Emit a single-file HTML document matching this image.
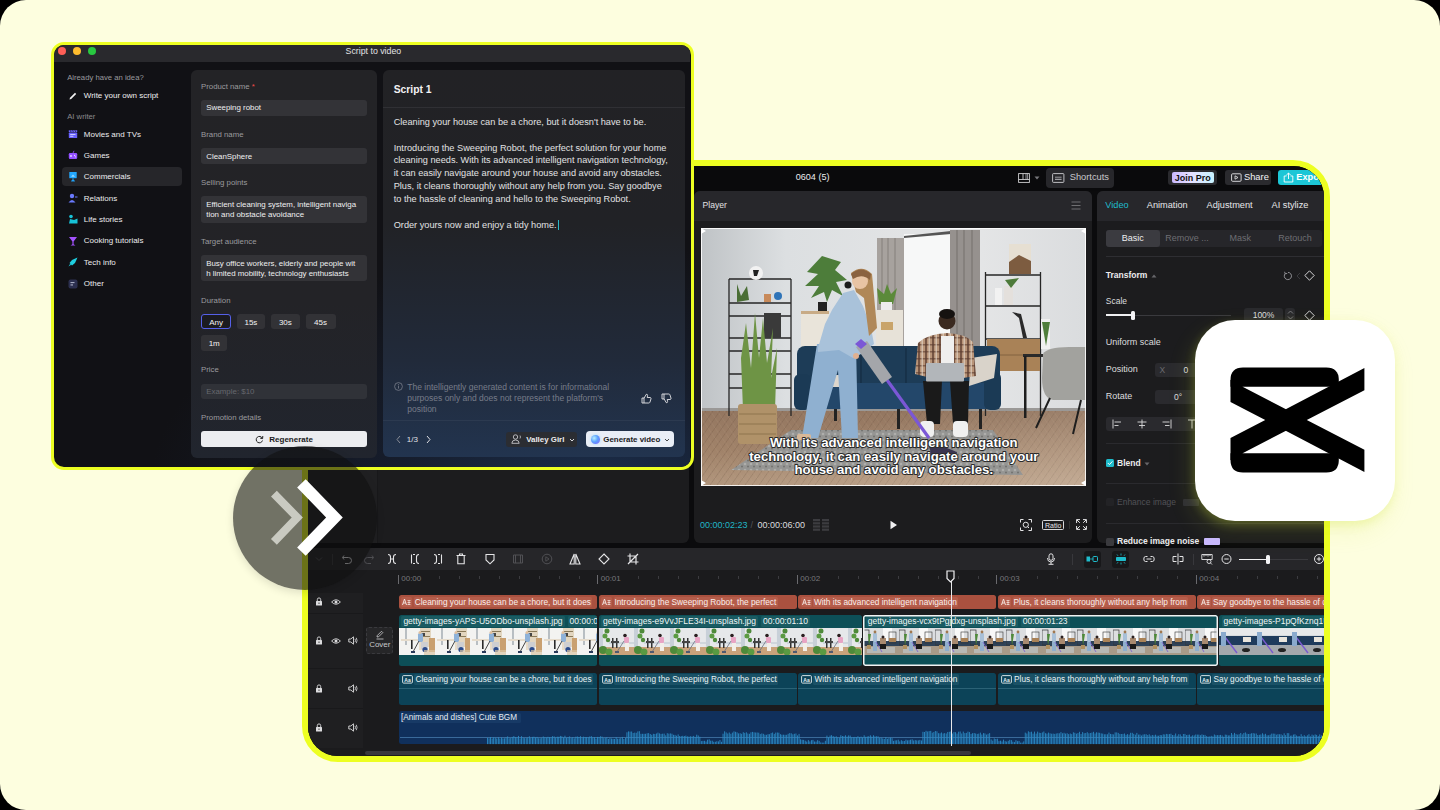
<!DOCTYPE html>
<html><head><meta charset="utf-8">
<style>
*{box-sizing:border-box;margin:0;padding:0}
html,body{width:1440px;height:810px;overflow:hidden;background:#000;font-family:"Liberation Sans",sans-serif}
.a{position:absolute}
#card{position:absolute;left:0;top:0;width:1440px;height:810px;border-radius:26px;background:#FDFEDF;overflow:hidden}
/* window 2 */
#w2{position:absolute;left:302px;top:159.5px;width:1028px;height:602.5px;border:6px solid #EDFF22;border-radius:14px 37px 36px 36px;background:#0b0b0d;overflow:hidden}
#w1{position:absolute;left:51px;top:41.5px;width:642.5px;height:428.5px;border:3.5px solid #EDFF22;border-radius:13px;background:#111115;overflow:hidden}
.t{position:absolute;white-space:nowrap;line-height:1}
</style></head><body>
<div id="card">

<div id="w2">
<div class="a" style="left:0;top:0;width:1016px;height:25.5px;background:#0a0a0c"></div>
<div class="t" style="left:487.7px;top:7.2px;font-size:9.1px;color:#ececee">0604 (5)</div>
<svg class="a" style="left:710px;top:7.5px" width="12" height="10" viewBox="0 0 12 10"><rect x="0.6" y="0.6" width="10.8" height="8.8" fill="none" stroke="#cfcfd2" stroke-width="0.9"/><line x1="0.6" y1="6.5" x2="11.4" y2="6.5" stroke="#cfcfd2" stroke-width="0.9"/><line x1="5" y1="0.6" x2="5" y2="6.5" stroke="#cfcfd2" stroke-width="0.9"/><line x1="8" y1="0.6" x2="8" y2="6.5" stroke="#cfcfd2" stroke-width="0.7"/><line x1="9.6" y1="0.6" x2="9.6" y2="6.5" stroke="#cfcfd2" stroke-width="0.7"/><rect x="0.6" y="0.6" width="4.4" height="5.9" fill="#cfcfd2" opacity="0.0"/></svg>
<svg class="a" style="left:726px;top:10.5px" width="6" height="4" viewBox="0 0 6 4"><path d="M0.5 0.5 L5.5 0.5 L3 3.5 Z" fill="#77777b"/></svg>
<div class="a" style="left:737.9px;top:2.8px;width:68.1px;height:19.4px;background:#27272b;border-radius:4px"></div>
<svg class="a" style="left:744px;top:7.3px" width="13" height="10" viewBox="0 0 13 10"><rect x="0.6" y="0.6" width="11.3" height="8.8" rx="0.8" fill="none" stroke="#cfcfd2" stroke-width="0.9"/><line x1="3" y1="4.2" x2="9.6" y2="4.2" stroke="#cfcfd2" stroke-width="0.7"/><line x1="3" y1="6.3" x2="9.6" y2="6.3" stroke="#cfcfd2" stroke-width="0.9"/></svg>
<div class="t" style="left:761.7px;top:7.4px;font-size:9.3px;color:#c9c9cd">Shortcuts</div>
<div class="a" style="left:860px;top:4.9px;width:48.5px;height:15px;background:#2a2a2e;border-radius:3px"></div>
<div class="a" style="left:863.5px;top:6.9px;width:42.5px;height:11.1px;border-radius:2px;background:linear-gradient(90deg,#c9b8ff 0%,#e6e0ff 45%,#c8f3ff 100%)"></div>
<div class="t" style="left:863.5px;width:42.5px;text-align:center;top:8px;font-size:9px;font-weight:700;color:#111">Join Pro</div>
<div class="a" style="left:916.6px;top:4.9px;width:46.2px;height:15px;background:#2a2a2e;border-radius:3px"></div>
<svg class="a" style="left:922.5px;top:7.5px" width="11" height="10" viewBox="0 0 11 10"><rect x="0.6" y="0.8" width="9.5" height="7.5" rx="1" fill="none" stroke="#e8e8ea" stroke-width="0.9"/><path d="M4 2.8 L7 4.5 L4 6.2 Z" fill="none" stroke="#e8e8ea" stroke-width="0.8"/></svg>
<div class="t" style="left:936px;top:7.6px;font-size:9.3px;color:#f4f4f6">Share</div>
<div class="a" style="left:970.2px;top:4.9px;width:60px;height:15px;background:#1cc6d6;border-radius:3px"></div>
<svg class="a" style="left:975px;top:6.5px" width="11" height="11" viewBox="0 0 11 11"><path d="M3.5 4 H1.2 V10 H9.8 V4 H7.5" fill="none" stroke="#fff" stroke-width="0.9"/><path d="M5.5 7 V1 M3.3 3.2 L5.5 1 L7.7 3.2" fill="none" stroke="#fff" stroke-width="0.9"/></svg>
<div class="t" style="left:988.3px;top:7.8px;font-size:9.2px;font-weight:700;color:#fff">Export</div>
<div class="a" style="left:0;top:25.5px;width:380.6px;height:351.7px;background:#1c1c1e;border-radius:0 6px 6px 0"></div>
<div class="a" style="left:0;top:25.5px;width:69px;height:351.7px;background:#202022"></div>
<div class="a" style="left:69px;top:25.5px;width:1px;height:351.7px;background:#18181a"></div>
<div class="a" style="left:386px;top:25.5px;width:397.7px;height:351.7px;background:#1c1c1e;border-radius:6px"></div>
<div class="a" style="left:386px;top:25.5px;width:397.7px;height:29.8px;background:#27272b;border-radius:6px 6px 0 0"></div>
<div class="t" style="left:394.5px;top:35.9px;font-size:8.6px;color:#e2e2e4">Player</div>
<svg class="a" style="left:762.6px;top:35.2px" width="10" height="9" viewBox="0 0 10 9"><line x1="0.5" y1="1" x2="9.5" y2="1" stroke="#77777b" stroke-width="0.9"/><line x1="0.5" y1="4.5" x2="9.5" y2="4.5" stroke="#77777b" stroke-width="0.9"/><line x1="0.5" y1="8" x2="9.5" y2="8" stroke="#77777b" stroke-width="0.9"/></svg>
<div class="t" style="left:392px;top:355.6px;font-size:9px;color:#20b6c6">00:00:02:23</div>
<div class="t" style="left:442.5px;top:355.6px;font-size:9px;color:#55555a">/</div>
<div class="t" style="left:449.5px;top:355.6px;font-size:9px;color:#dcdcde">00:00:06:00</div>
<svg class="a" style="left:505px;top:353.5px" width="16" height="12" viewBox="0 0 16 12"><g fill="#3c3c40"><rect x="0" y="0" width="7" height="2.2"/><rect x="0" y="3.2" width="7" height="2.2"/><rect x="0" y="6.4" width="7" height="2.2"/><rect x="0" y="9.6" width="7" height="2.2"/><rect x="9" y="0" width="7" height="2.2"/><rect x="9" y="3.2" width="7" height="2.2"/><rect x="9" y="6.4" width="7" height="2.2"/><rect x="9" y="9.6" width="7" height="2.2"/></g></svg>
<svg class="a" style="left:580.5px;top:354.3px" width="9" height="10" viewBox="0 0 9 10"><path d="M1.5 0.8 L8 5 L1.5 9.2 Z" fill="#f0f0f2"/></svg>
<svg class="a" style="left:712px;top:353.3px" width="12" height="12" viewBox="0 0 12 12"><path d="M0.5 3.5 V0.5 H3.5 M8.5 0.5 H11.5 V3.5 M11.5 8.5 V11.5 H8.5 M3.5 11.5 H0.5 V8.5" fill="none" stroke="#e6e6e8" stroke-width="1"/><circle cx="5.8" cy="5.8" r="2.6" fill="none" stroke="#e6e6e8" stroke-width="1"/><line x1="7.6" y1="7.6" x2="9" y2="9" stroke="#e6e6e8" stroke-width="1"/></svg>
<div class="a" style="left:734px;top:354px;width:22.4px;height:10.5px;border:1px solid #d8d8da;border-radius:1.5px"></div>
<div class="t" style="left:734px;width:22.4px;text-align:center;top:356.2px;font-size:7px;color:#e6e6e8">Ratio</div>
<div class="a" style="left:761px;top:355px;width:1px;height:8px;background:#333"></div>
<svg class="a" style="left:767.5px;top:353.8px" width="11" height="11" viewBox="0 0 11 11"><path d="M0.6 4 V0.6 H4 M7 0.6 H10.4 V4 M10.4 7 V10.4 H7 M4 10.4 H0.6 V7 M0.8 0.8 L3.8 3.8 M10.2 0.8 L7.2 3.8 M10.2 10.2 L7.2 7.2 M0.8 10.2 L3.8 7.2" fill="none" stroke="#e6e6e8" stroke-width="1"/></svg>
<div class="a" style="left:789.2px;top:25.5px;width:240px;height:351.7px;background:#1c1c1e;border-radius:6px 0 0 6px"></div>
<div class="a" style="left:789.2px;top:25.5px;width:240px;height:29.5px;background:#27272b;border-radius:6px 0 0 0"></div>
<div class="t" style="left:797.3px;top:35.1px;font-size:9.2px;color:#1fbccc">Video</div>
<div class="t" style="left:838.8px;top:35.1px;font-size:9.2px;color:#e8e8ea">Animation</div>
<div class="t" style="left:898.6px;top:35.1px;font-size:9.2px;color:#e8e8ea">Adjustment</div>
<div class="t" style="left:963.6px;top:35.1px;font-size:9.2px;color:#e8e8ea">AI stylize</div>
<div class="a" style="left:797.8px;top:64.9px;width:215.9px;height:16.6px;background:#26262a;border-radius:3px"></div>
<div class="a" style="left:797.8px;top:64.9px;width:54.1px;height:16.6px;background:#3b3b40;border-radius:3px"></div>
<div class="t" style="left:797.8px;width:54.1px;text-align:center;top:68.7px;font-size:9px;color:#eeeef0">Basic</div>
<div class="t" style="left:857.3px;top:68.7px;font-size:9px;color:#6e6e73">Remove ...</div>
<div class="t" style="left:912.2px;width:40px;text-align:center;top:68.7px;font-size:9px;color:#6e6e73">Mask</div>
<div class="t" style="left:962px;width:50px;text-align:center;top:68.7px;font-size:9px;color:#6e6e73">Retouch</div>
<div class="a" style="left:797.8px;top:90.3px;width:220px;height:1px;background:#2e2e32"></div>
<div class="t" style="left:797.8px;top:105.9px;font-size:8.5px;font-weight:700;color:#ececee">Transform</div>
<svg class="a" style="left:843px;top:108px" width="6" height="4" viewBox="0 0 6 4"><path d="M0.5 3.5 L5.5 3.5 L3 0.5 Z" fill="#66666a"/></svg>
<svg class="a" style="left:974.5px;top:105px" width="10" height="10" viewBox="0 0 10 10"><path d="M2.2 2.6 A3.6 3.6 0 1 0 5 1.4" fill="none" stroke="#9a9a9e" stroke-width="0.9"/><path d="M1.6 0.8 L2.2 2.8 L4.2 2.4" fill="none" stroke="#9a9a9e" stroke-width="0.9"/></svg>
<svg class="a" style="left:988px;top:105px" width="5" height="10" viewBox="0 0 5 10"><path d="M4 2 L1 5 L4 8" fill="none" stroke="#444448" stroke-width="0.8"/></svg>
<svg class="a" style="left:996.4px;top:104.6px" width="11" height="11" viewBox="0 0 11 11"><path d="M5.5 0.8 L10.2 5.5 L5.5 10.2 L0.8 5.5 Z" fill="none" stroke="#e6e6e8" stroke-width="0.9"/></svg>
<div class="t" style="left:797.8px;top:131.6px;font-size:8.5px;color:#dcdcde">Scale</div>
<div class="a" style="left:797.8px;top:149.1px;width:125px;height:1px;background:#3a3a3e"></div>
<div class="a" style="left:797.8px;top:148.8px;width:26.7px;height:1.6px;background:#f0f0f2"></div>
<div class="a" style="left:822.5px;top:145px;width:4.5px;height:9px;background:#f4f4f6;border-radius:1.5px"></div>
<div class="a" style="left:936.4px;top:142.2px;width:38.3px;height:14.8px;background:#2a2a2e;border-radius:3px"></div>
<div class="t" style="left:936.4px;width:38.3px;text-align:center;top:145.6px;font-size:8.5px;color:#dcdcde">100%</div>
<div class="a" style="left:976.7px;top:142.2px;width:10.8px;height:14.8px;background:#2a2a2e;border-radius:3px"></div>
<svg class="a" style="left:978.7px;top:144.5px" width="7" height="10" viewBox="0 0 7 10"><path d="M1 3.5 L3.5 1 L6 3.5 M1 6.5 L3.5 9 L6 6.5" fill="none" stroke="#8a8a8e" stroke-width="0.8"/></svg>
<svg class="a" style="left:996.4px;top:144px" width="11" height="11" viewBox="0 0 11 11"><path d="M5.5 0.8 L10.2 5.5 L5.5 10.2 L0.8 5.5 Z" fill="none" stroke="#e6e6e8" stroke-width="0.9"/></svg>
<div class="t" style="left:797.8px;top:172.3px;font-size:9px;color:#dcdcde">Uniform scale</div>
<div class="t" style="left:797.8px;top:199.2px;font-size:9px;color:#dcdcde">Position</div>
<div class="a" style="left:846.8px;top:197.2px;width:80px;height:14.2px;background:#2a2a2e;border-radius:3px"></div>
<div class="t" style="left:851.5px;top:200px;font-size:8.5px;color:#6a6a6e">X</div>
<div class="t" style="left:875.5px;top:200px;font-size:8.5px;color:#dcdcde">0</div>
<div class="t" style="left:797.8px;top:226.5px;font-size:9px;color:#dcdcde">Rotate</div>
<div class="a" style="left:846.8px;top:224.2px;width:80px;height:14.7px;background:#2a2a2e;border-radius:3px"></div>
<div class="t" style="left:866px;top:227.3px;font-size:8.5px;color:#dcdcde">0°</div>
<div class="a" style="left:797.6px;top:251.1px;width:120px;height:14.8px;background:#2a2a2e;border-radius:3px"></div>
<svg class="a" style="left:804px;top:253.5px" width="90" height="10" viewBox="0 0 90 10"><g stroke="#dcdcde" stroke-width="0.9" fill="none"><line x1="1" y1="0.5" x2="1" y2="9.5"/><line x1="2.5" y1="3" x2="9" y2="3"/><line x1="2.5" y1="6.5" x2="6.5" y2="6.5"/><line x1="30" y1="0.5" x2="30" y2="9.5"/><line x1="25.5" y1="3" x2="34.5" y2="3"/><line x1="27" y1="6.5" x2="33" y2="6.5"/><line x1="59" y1="0.5" x2="59" y2="9.5"/><line x1="50.5" y1="3" x2="57.5" y2="3"/><line x1="53" y1="6.5" x2="57.5" y2="6.5"/><line x1="76" y1="1" x2="84" y2="1"/><line x1="80" y1="1" x2="80" y2="9.5"/></g></svg>
<div class="a" style="left:797.8px;top:277.5px;width:220px;height:1px;background:#2a2a2e"></div>
<div class="a" style="left:798px;top:293.6px;width:8px;height:8px;background:#1fbccc;border-radius:1.5px"></div>
<svg class="a" style="left:798px;top:293.6px" width="8" height="8" viewBox="0 0 8 8"><path d="M1.8 4 L3.4 5.6 L6.4 2.4" fill="none" stroke="#fff" stroke-width="1"/></svg>
<div class="t" style="left:809px;top:293.3px;font-size:8.5px;font-weight:700;color:#ececee">Blend</div>
<svg class="a" style="left:836px;top:296px" width="6" height="4" viewBox="0 0 6 4"><path d="M0.5 0.5 L5.5 0.5 L3 3.5 Z" fill="#66666a"/></svg>
<div class="a" style="left:797.8px;top:317.3px;width:220px;height:1px;background:#2a2a2e"></div>
<div class="a" style="left:798px;top:332.5px;width:8px;height:8px;background:#232326;border-radius:1.5px"></div>
<div class="t" style="left:809px;top:332.4px;font-size:8.5px;color:#515156">Enhance image</div>
<div class="a" style="left:875px;top:333px;width:16px;height:7px;background:#2e2e34;border-radius:1px"></div>
<div class="a" style="left:797.8px;top:357.1px;width:220px;height:1px;background:#2a2a2e"></div>
<div class="a" style="left:798px;top:372px;width:8px;height:8px;background:#3a3a3e;border-radius:1.5px"></div>
<div class="t" style="left:809px;top:371.9px;font-size:8.5px;font-weight:700;color:#ececee">Reduce image noise</div>
<div class="a" style="left:896px;top:372.5px;width:16px;height:7px;background:#c8b8ff;border-radius:1px"></div>
<div class="a" style="left:0;top:382px;width:1016px;height:22.5px;background:#262629"></div>
<svg class="a" style="left:5.25px;top:387.75px" width="12" height="12" viewBox="0 0 12 12"><path d="M3 4.5 L6 7.5 L9 4.5" fill="none" stroke="#505054" stroke-width="1"/></svg>
<div class="a" style="left:24px;top:388.5px;width:1px;height:10.5px;background:#3a3a3e"></div>
<svg class="a" style="left:32.5px;top:387.75px" width="12" height="12" viewBox="0 0 12 12"><path d="M3 2.5 L1.5 4.5 L3 6.5 M1.8 4.5 H7.5 A3 3 0 0 1 7.5 10.5 H4" fill="none" stroke="#e4e4e6" stroke-width="1"/></svg>
<svg class="a" style="left:55.25px;top:387.75px" width="12" height="12" viewBox="0 0 12 12"><path d="M9 2.5 L10.5 4.5 L9 6.5 M10.2 4.5 H4.5 A3 3 0 0 0 4.5 10.5 H8" fill="none" stroke="#505054" stroke-width="1"/></svg>
<svg class="a" style="left:78.0px;top:387.75px" width="12" height="12" viewBox="0 0 12 12"><path d="M2 1.5 Q4.5 1.5 4.5 4 V8 Q4.5 10.5 2 10.5 M10 1.5 Q7.5 1.5 7.5 4 V8 Q7.5 10.5 10 10.5 M5 6 H7" fill="none" stroke="#e4e4e6" stroke-width="1.1"/></svg>
<svg class="a" style="left:101.0px;top:387.75px" width="12" height="12" viewBox="0 0 12 12"><path d="M2.5 1.5 V10.5 M4 1.5 H6 M4 10.5 H6 M10 1.5 Q7.5 1.5 7.5 4 V8 Q7.5 10.5 10 10.5" fill="none" stroke="#e4e4e6" stroke-width="1.1"/></svg>
<svg class="a" style="left:123.5px;top:387.75px" width="12" height="12" viewBox="0 0 12 12"><path d="M9.5 1.5 V10.5 M8 1.5 H6 M8 10.5 H6 M2 1.5 Q4.5 1.5 4.5 4 V8 Q4.5 10.5 2 10.5" fill="none" stroke="#e4e4e6" stroke-width="1.1"/></svg>
<svg class="a" style="left:146.75px;top:387.75px" width="12" height="12" viewBox="0 0 12 12"><path d="M1.5 2.5 H10.5 M4.5 2.5 V1 H7.5 V2.5 M2.8 2.5 V10.8 H9.2 V2.5" fill="none" stroke="#e4e4e6" stroke-width="1.1"/></svg>
<svg class="a" style="left:176.0px;top:387.75px" width="12" height="12" viewBox="0 0 12 12"><path d="M2 1.5 H10 V7 L6 10.8 L2 7 Z" fill="none" stroke="#e4e4e6" stroke-width="1.1"/></svg>
<svg class="a" style="left:204.0px;top:387.75px" width="12" height="12" viewBox="0 0 12 12"><path d="M1.5 2 H10.5 V10 H1.5 Z M3.5 2 V10 M8.5 2 V10" fill="none" stroke="#505054" stroke-width="1"/></svg>
<svg class="a" style="left:232.75px;top:387.75px" width="12" height="12" viewBox="0 0 12 12"><circle cx="6" cy="6" r="4.8" fill="none" stroke="#505054" stroke-width="1"/><path d="M4.8 3.8 L8 6 L4.8 8.2 Z" fill="none" stroke="#505054" stroke-width="0.9"/></svg>
<svg class="a" style="left:261.0px;top:387.75px" width="12" height="12" viewBox="0 0 12 12"><path d="M5.2 1 V11 L1 11 Z M6.8 1 V11 L11 11 Z" fill="none" stroke="#e4e4e6" stroke-width="1.1"/></svg>
<svg class="a" style="left:289.75px;top:387.75px" width="12" height="12" viewBox="0 0 12 12"><path d="M6 1 L11 6 L6 11 L1 6 Z" fill="none" stroke="#e4e4e6" stroke-width="1.1"/><path d="M8 0.5 L9.5 2 M2.5 10 L4 11.5" stroke="#262629" stroke-width="1.5"/></svg>
<svg class="a" style="left:318.5px;top:387.75px" width="12" height="12" viewBox="0 0 12 12"><path d="M3 0.5 V9 H11.5 M0.5 3 H9 V11.5 M1 11 L11 1" fill="none" stroke="#e4e4e6" stroke-width="1.2"/></svg>
<svg class="a" style="left:736.9px;top:387.75px" width="12" height="12" viewBox="0 0 12 12"><rect x="4" y="0.8" width="4" height="6.5" rx="2" fill="none" stroke="#e4e4e6" stroke-width="1"/><path d="M2.5 5 Q2.5 9 6 9 Q9.5 9 9.5 5 M6 9 V11 M3.5 11.3 H8.5" fill="none" stroke="#e4e4e6" stroke-width="1"/></svg>
<div class="a" style="left:764px;top:388.5px;width:1px;height:10.5px;background:#38383c"></div>
<div class="a" style="left:775.8px;top:385.3px;width:16.8px;height:16.8px;background:#18181a;border-radius:3px"></div>
<div class="a" style="left:804.2px;top:385.3px;width:16.8px;height:16.8px;background:#18181a;border-radius:3px"></div>
<svg class="a" style="left:778.2px;top:387.75px" width="12" height="12" viewBox="0 0 12 12"><rect x="0.5" y="3.5" width="3.5" height="5" fill="#1fbccc"/><rect x="7" y="3.5" width="4.5" height="5" rx="0.8" fill="none" stroke="#1fbccc" stroke-width="1"/><path d="M4 6 H7" stroke="#1fbccc" stroke-width="0.8"/></svg>
<svg class="a" style="left:806.6px;top:387.75px" width="12" height="12" viewBox="0 0 12 12"><rect x="1" y="4" width="10" height="4" rx="0.8" fill="#1fbccc"/><path d="M6 0.5 V2.5 M6 9.5 V11.5 M2 1.5 L3 2.8 M10 1.5 L9 2.8 M2 10.5 L3 9.2 M10 10.5 L9 9.2" stroke="#1fbccc" stroke-width="0.8"/></svg>
<svg class="a" style="left:835.0px;top:387.75px" width="12" height="12" viewBox="0 0 12 12"><path d="M4.5 3.5 H2.5 Q0.8 3.5 0.8 6 Q0.8 8.5 2.5 8.5 H4.5 M7.5 3.5 H9.5 Q11.2 3.5 11.2 6 Q11.2 8.5 9.5 8.5 H7.5 M3.5 6 H8.5" fill="none" stroke="#e4e4e6" stroke-width="1"/></svg>
<svg class="a" style="left:863.7px;top:387.75px" width="12" height="12" viewBox="0 0 12 12"><path d="M6 0.5 V11.5 M4.5 3.5 H1 V8.5 H4.5 M7.5 3.5 H11 V8.5 H7.5" fill="none" stroke="#e4e4e6" stroke-width="1"/></svg>
<div class="a" style="left:884.5px;top:388.5px;width:1px;height:10.5px;background:#38383c"></div>
<svg class="a" style="left:892.5px;top:387.75px" width="12" height="12" viewBox="0 0 12 12"><path d="M0.8 1.5 H11.2 V6.5 H0.8 Z M3 1.5 V3.5 M5 1.5 V3 M7 1.5 V3.5 M9 1.5 V3" fill="none" stroke="#e4e4e6" stroke-width="0.9"/><circle cx="8" cy="8.5" r="2" fill="none" stroke="#e4e4e6" stroke-width="0.9"/><path d="M9.4 9.9 L11 11.5" stroke="#e4e4e6" stroke-width="0.9"/></svg>
<svg class="a" style="left:913.0px;top:387.75px" width="12" height="12" viewBox="0 0 12 12"><circle cx="5.5" cy="6" r="4.5" fill="none" stroke="#e4e4e6" stroke-width="1"/><path d="M3.3 6 H7.7" stroke="#e4e4e6" stroke-width="1"/></svg>
<div class="a" style="left:930.8px;top:393.3px;width:69px;height:1px;background:#3a3a3e"></div>
<div class="a" style="left:930.8px;top:393px;width:29px;height:1.6px;background:#f0f0f2"></div>
<div class="a" style="left:957.6px;top:389.2px;width:4.8px;height:9px;background:#f4f4f6;border-radius:1.5px"></div>
<svg class="a" style="left:1004.5px;top:387.75px" width="12" height="12" viewBox="0 0 12 12"><circle cx="6" cy="6" r="4.5" fill="none" stroke="#e4e4e6" stroke-width="1"/><path d="M3.8 6 H8.2 M6 3.8 V8.2" stroke="#e4e4e6" stroke-width="1"/></svg>
<div class="a" style="left:0;top:404.5px;width:1016px;height:186px;background:#1b1b1d"></div>
<div class="a" style="left:0;top:427.4px;width:54.5px;height:155px;background:#1f1f21"></div>
<div class="a" style="left:0;top:447.4px;width:54.5px;height:1px;background:#19191b"></div>
<div class="a" style="left:0;top:502.5px;width:54.5px;height:1px;background:#19191b"></div>
<div class="a" style="left:0;top:542.5px;width:54.5px;height:1px;background:#19191b"></div>
<div class="a" style="left:89.95px;top:409px;width:0.8px;height:9px;background:#6a6a6e"></div>
<div class="t" style="left:93.25px;top:409.5px;font-size:8px;color:#77777b">00:00</div>
<div class="a" style="left:289.45px;top:409px;width:0.8px;height:9px;background:#6a6a6e"></div>
<div class="t" style="left:292.75px;top:409.5px;font-size:8px;color:#77777b">00:01</div>
<div class="a" style="left:488.95px;top:409px;width:0.8px;height:9px;background:#6a6a6e"></div>
<div class="t" style="left:492.25px;top:409.5px;font-size:8px;color:#77777b">00:02</div>
<div class="a" style="left:688.45px;top:409px;width:0.8px;height:9px;background:#6a6a6e"></div>
<div class="t" style="left:691.75px;top:409.5px;font-size:8px;color:#77777b">00:03</div>
<div class="a" style="left:887.95px;top:409px;width:0.8px;height:9px;background:#6a6a6e"></div>
<div class="t" style="left:891.25px;top:409.5px;font-size:8px;color:#77777b">00:04</div>
<div class="a" style="left:130.75px;top:410px;width:0.8px;height:3.5px;background:#3c3c40"></div>
<div class="a" style="left:150.75px;top:410px;width:0.8px;height:3.5px;background:#3c3c40"></div>
<div class="a" style="left:170.75px;top:410px;width:0.8px;height:3.5px;background:#3c3c40"></div>
<div class="a" style="left:190.75px;top:410px;width:0.8px;height:3.5px;background:#3c3c40"></div>
<div class="a" style="left:210.75px;top:410px;width:0.8px;height:3.5px;background:#3c3c40"></div>
<div class="a" style="left:230.75px;top:410px;width:0.8px;height:3.5px;background:#3c3c40"></div>
<div class="a" style="left:250.75px;top:410px;width:0.8px;height:3.5px;background:#3c3c40"></div>
<div class="a" style="left:270.75px;top:410px;width:0.8px;height:3.5px;background:#3c3c40"></div>
<div class="a" style="left:330.25px;top:410px;width:0.8px;height:3.5px;background:#3c3c40"></div>
<div class="a" style="left:350.25px;top:410px;width:0.8px;height:3.5px;background:#3c3c40"></div>
<div class="a" style="left:370.25px;top:410px;width:0.8px;height:3.5px;background:#3c3c40"></div>
<div class="a" style="left:390.25px;top:410px;width:0.8px;height:3.5px;background:#3c3c40"></div>
<div class="a" style="left:410.25px;top:410px;width:0.8px;height:3.5px;background:#3c3c40"></div>
<div class="a" style="left:430.25px;top:410px;width:0.8px;height:3.5px;background:#3c3c40"></div>
<div class="a" style="left:450.25px;top:410px;width:0.8px;height:3.5px;background:#3c3c40"></div>
<div class="a" style="left:470.25px;top:410px;width:0.8px;height:3.5px;background:#3c3c40"></div>
<div class="a" style="left:529.75px;top:410px;width:0.8px;height:3.5px;background:#3c3c40"></div>
<div class="a" style="left:549.75px;top:410px;width:0.8px;height:3.5px;background:#3c3c40"></div>
<div class="a" style="left:569.75px;top:410px;width:0.8px;height:3.5px;background:#3c3c40"></div>
<div class="a" style="left:589.75px;top:410px;width:0.8px;height:3.5px;background:#3c3c40"></div>
<div class="a" style="left:609.75px;top:410px;width:0.8px;height:3.5px;background:#3c3c40"></div>
<div class="a" style="left:629.75px;top:410px;width:0.8px;height:3.5px;background:#3c3c40"></div>
<div class="a" style="left:649.75px;top:410px;width:0.8px;height:3.5px;background:#3c3c40"></div>
<div class="a" style="left:669.75px;top:410px;width:0.8px;height:3.5px;background:#3c3c40"></div>
<div class="a" style="left:729.25px;top:410px;width:0.8px;height:3.5px;background:#3c3c40"></div>
<div class="a" style="left:749.25px;top:410px;width:0.8px;height:3.5px;background:#3c3c40"></div>
<div class="a" style="left:769.25px;top:410px;width:0.8px;height:3.5px;background:#3c3c40"></div>
<div class="a" style="left:789.25px;top:410px;width:0.8px;height:3.5px;background:#3c3c40"></div>
<div class="a" style="left:809.25px;top:410px;width:0.8px;height:3.5px;background:#3c3c40"></div>
<div class="a" style="left:829.25px;top:410px;width:0.8px;height:3.5px;background:#3c3c40"></div>
<div class="a" style="left:849.25px;top:410px;width:0.8px;height:3.5px;background:#3c3c40"></div>
<div class="a" style="left:869.25px;top:410px;width:0.8px;height:3.5px;background:#3c3c40"></div>
<div class="a" style="left:928.75px;top:410px;width:0.8px;height:3.5px;background:#3c3c40"></div>
<div class="a" style="left:948.75px;top:410px;width:0.8px;height:3.5px;background:#3c3c40"></div>
<div class="a" style="left:968.75px;top:410px;width:0.8px;height:3.5px;background:#3c3c40"></div>
<div class="a" style="left:988.75px;top:410px;width:0.8px;height:3.5px;background:#3c3c40"></div>
<div class="a" style="left:1008.75px;top:410px;width:0.8px;height:3.5px;background:#3c3c40"></div>
<svg class="a" style="left:6.6px;top:431.8px" width="8" height="9" viewBox="0 0 8 9"><rect x="1" y="4" width="6" height="4.5" rx="0.6" fill="#dcdcde"/><path d="M2.3 4 V2.6 A1.7 1.7 0 0 1 5.7 2.6 V4" fill="none" stroke="#dcdcde" stroke-width="0.9"/><rect x="3.6" y="5.5" width="0.8" height="1.5" fill="#1f1f21"/></svg>
<svg class="a" style="left:22.8px;top:432.3px" width="10" height="8" viewBox="0 0 10 8"><path d="M0.6 4 Q5 -0.5 9.4 4 Q5 8.5 0.6 4 Z" fill="none" stroke="#dcdcde" stroke-width="0.9"/><circle cx="5" cy="4" r="1.5" fill="#dcdcde"/></svg>
<svg class="a" style="left:6.6px;top:470.6px" width="8" height="9" viewBox="0 0 8 9"><rect x="1" y="4" width="6" height="4.5" rx="0.6" fill="#dcdcde"/><path d="M2.3 4 V2.6 A1.7 1.7 0 0 1 5.7 2.6 V4" fill="none" stroke="#dcdcde" stroke-width="0.9"/><rect x="3.6" y="5.5" width="0.8" height="1.5" fill="#1f1f21"/></svg>
<svg class="a" style="left:22.8px;top:471.1px" width="10" height="8" viewBox="0 0 10 8"><path d="M0.6 4 Q5 -0.5 9.4 4 Q5 8.5 0.6 4 Z" fill="none" stroke="#dcdcde" stroke-width="0.9"/><circle cx="5" cy="4" r="1.5" fill="#dcdcde"/></svg>
<svg class="a" style="left:39.9px;top:470.6px" width="10" height="9" viewBox="0 0 10 9"><path d="M0.8 3 H2.8 L5.5 0.8 V8.2 L2.8 6 H0.8 Z" fill="none" stroke="#dcdcde" stroke-width="0.9"/><path d="M7 2.8 Q8 4.5 7 6.2 M8.3 1.8 Q9.8 4.5 8.3 7.2" fill="none" stroke="#dcdcde" stroke-width="0.8"/></svg>
<svg class="a" style="left:6.6px;top:518.5px" width="8" height="9" viewBox="0 0 8 9"><rect x="1" y="4" width="6" height="4.5" rx="0.6" fill="#dcdcde"/><path d="M2.3 4 V2.6 A1.7 1.7 0 0 1 5.7 2.6 V4" fill="none" stroke="#dcdcde" stroke-width="0.9"/><rect x="3.6" y="5.5" width="0.8" height="1.5" fill="#1f1f21"/></svg>
<svg class="a" style="left:39.9px;top:518.5px" width="10" height="9" viewBox="0 0 10 9"><path d="M0.8 3 H2.8 L5.5 0.8 V8.2 L2.8 6 H0.8 Z" fill="none" stroke="#dcdcde" stroke-width="0.9"/><path d="M7 2.8 Q8 4.5 7 6.2 M8.3 1.8 Q9.8 4.5 8.3 7.2" fill="none" stroke="#dcdcde" stroke-width="0.8"/></svg>
<svg class="a" style="left:6.6px;top:557.4px" width="8" height="9" viewBox="0 0 8 9"><rect x="1" y="4" width="6" height="4.5" rx="0.6" fill="#dcdcde"/><path d="M2.3 4 V2.6 A1.7 1.7 0 0 1 5.7 2.6 V4" fill="none" stroke="#dcdcde" stroke-width="0.9"/><rect x="3.6" y="5.5" width="0.8" height="1.5" fill="#1f1f21"/></svg>
<svg class="a" style="left:39.9px;top:557.4px" width="10" height="9" viewBox="0 0 10 9"><path d="M0.8 3 H2.8 L5.5 0.8 V8.2 L2.8 6 H0.8 Z" fill="none" stroke="#dcdcde" stroke-width="0.9"/><path d="M7 2.8 Q8 4.5 7 6.2 M8.3 1.8 Q9.8 4.5 8.3 7.2" fill="none" stroke="#dcdcde" stroke-width="0.8"/></svg>
<div class="a" style="left:58.3px;top:461.5px;width:27px;height:27px;background:#262628;border:1px dashed #3a3a3e;border-radius:3px"></div>
<svg class="a" style="left:67px;top:464.5px" width="10" height="10" viewBox="0 0 10 10"><path d="M2 7 L2.3 5.5 L6.5 1.3 L7.8 2.6 L3.6 6.8 Z" fill="none" stroke="#d0d0d2" stroke-width="0.8"/><line x1="1.5" y1="9" x2="8.5" y2="9" stroke="#d0d0d2" stroke-width="0.8"/></svg>
<div class="t" style="left:58.3px;width:27px;text-align:center;top:475.5px;font-size:8px;color:#c8c8ca">Cover</div>
<div class="a" style="left:392.8px;top:62.5px;width:385px;height:257.5px;overflow:hidden">
<svg width="385" height="257.5" viewBox="0 0 385 257.5" style="position:absolute;left:0;top:0">
<defs>
<linearGradient id="wall" x1="0" y1="0" x2="1" y2="0"><stop offset="0" stop-color="#bfc3c6"/><stop offset="0.22" stop-color="#dcdfe1"/><stop offset="0.7" stop-color="#e5e6e7"/><stop offset="1" stop-color="#dadcde"/></linearGradient>
<linearGradient id="floor" x1="0" y1="0" x2="0" y2="1"><stop offset="0" stop-color="#937660"/><stop offset="0.5" stop-color="#a08269"/><stop offset="1" stop-color="#aa8d73"/></linearGradient>
<linearGradient id="floorlight" x1="0" y1="0" x2="1" y2="1"><stop offset="0.3" stop-color="#fff4e6" stop-opacity="0"/><stop offset="1" stop-color="#fff4e6" stop-opacity="0.3"/></linearGradient><pattern id="herr" width="14" height="10" patternUnits="userSpaceOnUse"><path d="M0 10 L7 0 M7 10 L14 0" stroke="#6e5442" stroke-width="0.6" opacity="0.5"/><path d="M0 0 L7 10 M7 0 L14 10" stroke="#b89a7e" stroke-width="0.5" opacity="0.35"/></pattern>
<pattern id="rugp" width="6" height="6" patternUnits="userSpaceOnUse"><rect width="6" height="6" fill="#959593"/><circle cx="2" cy="2" r="1.3" fill="#aeaeab"/><circle cx="5" cy="4.5" r="1" fill="#72726f"/></pattern>
<pattern id="check" width="7" height="7" patternUnits="userSpaceOnUse"><rect width="7" height="7" fill="#b89478"/><rect x="0" y="0" width="2" height="7" fill="#5a3a2e" opacity="0.7"/><rect x="0" y="4" width="7" height="1.5" fill="#5a3a2e" opacity="0.6"/><rect x="3.5" y="0" width="1.5" height="7" fill="#e8ddd0" opacity="0.6"/></pattern>
</defs>
<rect width="385" height="258" fill="url(#wall)"/>
<rect x="203" y="6" width="47" height="115" fill="#f7f8f8"/>
<path d="M203 8 L250 3 L250 6 L203 10 Z" fill="#555"/>
<rect x="176" y="10" width="27" height="111" fill="#a7a29e"/>
<path d="M181 10 V121 M187 10 V121 M194 10 V121" stroke="#8a8581" stroke-width="1.2"/>
<rect x="249" y="2" width="30" height="119" fill="#96918e"/>
<path d="M256 2 V121 M263 2 V121 M271 2 V121" stroke="#7e7976" stroke-width="1.4"/>
<rect x="0" y="182" width="385" height="76" fill="url(#floor)"/>
<rect x="0" y="182" width="385" height="76" fill="url(#herr)"/><rect x="0" y="182" width="385" height="76" fill="url(#floorlight)"/>
<rect x="0" y="180" width="385" height="3" fill="#9a9896"/>
<!-- left shelf -->
<g stroke="#262626" stroke-width="1.3" fill="none">
<path d="M28 51 V188 M90 51 V188 M28 51 H90 M28 75 H90 M28 88 H90 M28 110 H90 M28 123 H90 M28 146 H90 M28 160 H90"/>
</g>
<circle cx="55" cy="45" r="7" fill="#f2f2f2"/><path d="M52 42 L58 42 L56 48 L53 48 Z" fill="#222"/>
<rect x="63" y="85" width="17" height="25" fill="#3a3a3a"/>
<circle cx="77" cy="68" r="4" fill="#2f74b8"/>
<rect x="63" y="66" width="7" height="8" fill="#c88a5a"/>
<!-- white shelf center left -->
<rect x="100" y="83" width="28" height="65" fill="#e9e4da"/>
<rect x="100" y="83" width="28" height="3" fill="#c8ab86"/>
<rect x="175" y="82" width="27" height="38" fill="#e7e2d8"/>
<rect x="180" y="94" width="12" height="8" fill="#c9a46a"/>
<!-- plants -->
<path d="M121 28 L106 44 L117 46 L104 58 L118 58 L110 70 L123 64 L126 74 L131 62 L142 68 L135 54 L146 52 L134 42 L140 34 Z" fill="#4d7d3a"/>
<rect x="117" y="74" width="9" height="9" fill="#222"/>
<path d="M176 60 L183 66 L186 56 L190 66 L196 60 L192 76 L178 76 Z" fill="#5b8a3a"/>
<rect x="180" y="74" width="11" height="8" fill="#ececec"/>
<path d="M42 182 L40 130 L45 95 L50 140 L54 85 L58 130 L62 90 L66 135 L72 100 L70 150 L76 120 L74 182 Z" fill="#6e9445"/>
<path d="M36 56 L40 68 L46 58 L48 72 L36 74 Z" fill="#4a6e35"/>
<rect x="37" y="176" width="39" height="40" rx="3" fill="#b09269"/>
<path d="M38 186 H75 M38 196 H75 M38 206 H75" stroke="#8e744f" stroke-width="1"/>
<!-- right shelf -->
<g stroke="#262626" stroke-width="1.3" fill="none">
<path d="M284.5 44 V188 M339.5 44 V188 M284.5 47 H339.5 M284.5 78 H339.5 M284.5 111 H339.5"/>
</g>
<rect x="308" y="16" width="22" height="30" fill="#e6dfd2"/><path d="M308 34 L318 27 L330 33 V46 H308 Z" fill="#7d5c40"/>
<rect x="286" y="111" width="53" height="32" fill="#a98257"/>
<path d="M286 127 H339" stroke="#7a5a3a" stroke-width="0.8"/>
<rect x="294" y="60" width="7" height="17" fill="#f2f2f2"/><rect x="303" y="58" width="9" height="19" fill="#e4e0dc"/>
<path d="M304 52 L310 60 L318 50 Z" fill="#4d7a3a"/>
<path d="M311 84 L320 86 L326 110 L322 110 L318 90 Z" fill="#2a2a2a"/>
<rect x="340" y="91" width="9" height="30" fill="#f0f0f0"/>
<path d="M341 94 L345 118 L349 94 Z" fill="#4f7e3a"/>
<!-- desk and chair right -->
<rect x="322" y="126" width="40" height="3" fill="#2a2a2a"/>
<rect x="323" y="128" width="2.5" height="62" fill="#1e1e1e"/>
<path d="M342 126 Q346 119 368 119 L385 119 L385 172 L352 172 Q341 170 341 150 Z" fill="#a2a29e"/>
<path d="M349 170 L335 200 M380 172 L372 206" stroke="#1e1e1e" stroke-width="2"/>
<!-- sofa -->
<rect x="96" y="118" width="203" height="44" rx="8" fill="#1d3c57"/>
<path d="M160 122 V158 M205 120 V158" stroke="#152c42" stroke-width="1.2"/>
<rect x="100" y="155" width="195" height="26" rx="4" fill="#23476a"/>
<rect x="93" y="146" width="17" height="36" rx="6" fill="#1b3a55"/>
<rect x="283" y="144" width="17" height="38" rx="6" fill="#1b3a55"/>
<path d="M270 130 L296 126 L293 150 L268 158 Z" fill="#d9d3ca"/>
<rect x="130" y="147" width="18" height="12" fill="#ddd6cc"/>
<rect x="133" y="181" width="3" height="12" fill="#222"/><rect x="196" y="181" width="3" height="20" fill="#222"/><rect x="278" y="181" width="3" height="20" fill="#222"/>
<!-- rug -->
<path d="M30 242 L90 202 L292 202 L322 247 Z" fill="url(#rugp)"/>
<!-- man -->
<path d="M222 153 H241 L239 196 H226 Z M249 153 H268 L267 196 H252 Z" fill="#1a1a1a"/>
<rect x="219" y="193" width="14" height="16" rx="4" fill="#f0f0f0"/><rect x="252" y="193" width="15" height="16" rx="4" fill="#f0f0f0"/>
<path d="M214 146 L217 115 Q226 106 246 105 Q265 106 272 114 L275 148 L262 150 L230 150 Z" fill="url(#check)"/>
<rect x="240" y="108" width="13" height="30" fill="#f0efee"/>
<rect x="225" y="135" width="38" height="18.5" rx="1" fill="#b2b6ba"/>
<circle cx="246" cy="93" r="8.5" fill="#3b2a20"/><ellipse cx="246" cy="86" rx="8" ry="5" fill="#161210"/>
<!-- woman -->
<path d="M101 210 L116 116 L155 116 L157 210 L141 210 L137 142 L117 210 Z" fill="#8fb0d0"/>
<path d="M117 120 L124 96 L131 82 L142 65 L153 62 L162 78 L170 100 L173 116 L160 126 L152 130 L138 122 L117 124 Z" fill="#a9c2da"/>
<path d="M150 45 Q161 36 171 46 L176 100 L168 108 L163 70 L155 64 Z" fill="#b08858"/>
<circle cx="159" cy="53" r="8" fill="#e8c4a4"/>
<path d="M150 46 Q160 37 170 46 L169 52 Q161 45 152 51 Z" fill="#8a6240"/>
<circle cx="147" cy="57" r="3.5" fill="#1c1c1c"/>
<rect x="96" y="206" width="14" height="6" rx="2" fill="#d8b898"/>
<circle cx="155" cy="128" r="3" fill="#e0b090"/>
<!-- vacuum -->
<path d="M186 152 L228 210" stroke="#7b57d6" stroke-width="3.2"/>
<path d="M155 119 L166 113 L191 149 L181 156 Z" fill="#a4a6aa"/>
<path d="M154 116 L160 111 L166 116 L160 121 Z" fill="#7b57d6"/>
<path d="M226 212 L256 224 L254 235 L232 232 Z" fill="#3a3550"/>
</svg>
<svg width="385" height="257.5" viewBox="0 0 385 257.5" style="position:absolute;left:0;top:0">
<g font-family="Liberation Sans" font-weight="700" font-size="13.2" text-anchor="middle" fill="#ffffff" stroke="#2a2a2a" stroke-width="2" paint-order="stroke" stroke-linejoin="round">
<text x="192.8" y="219.4">With its advanced intelligent navigation</text>
<text x="192.8" y="233">technology, it can easily navigate around your</text>
<text x="192.8" y="246.4">house and avoid any obstacles.</text>
</g>
</svg>
<div class="a" style="left:0;top:0;width:385px;height:257.5px;box-shadow:inset 0 0 0 1px rgba(255,255,255,0.85)"></div>
<svg class="a" style="left:0;top:0" width="385" height="258" viewBox="0 0 385 258"><path d="M0 0 L5 3 L0 6 Z M385 0 L380 3 L385 6 Z M0 258 L0 252 L5 255 Z M385 258 L385 252 L380 255 Z" fill="#fff"/></svg>
</div>

<div class="a" style="left:90.9px;top:429.4px;width:198.3px;height:13.9px;background:#aa513f;border-radius:2.5px;overflow:hidden"><div class="a" style="left:2.5px;top:2px;width:11px;height:10px;background:#b55d4b;border-radius:1.5px"></div><svg class="a" style="left:3.5px;top:3px" width="9" height="8" viewBox="0 0 9 8"><path d="M0.5 7 L2.5 1 L4.5 7 M1.2 5 H3.8" fill="none" stroke="#f6ece8" stroke-width="0.9"/><path d="M5.5 2.5 H8.5 M5.5 4.5 H8.5 M5.5 6.5 H8.5 M7 2.5 V7" fill="none" stroke="#f6ece8" stroke-width="0.7"/></svg><div class="a" style="left:15px;top:2px;white-space:nowrap;line-height:1;font-size:8.3px;color:#fbefec"><span style="display:inline-block;background:#b55d4b;border-radius:1.5px;padding:1.3px 1.5px 0 0.9px;height:10px">Cleaning your house can be a chore, but it does</span></div></div>
<div class="a" style="left:290.5px;top:429.4px;width:198.3px;height:13.9px;background:#aa513f;border-radius:2.5px;overflow:hidden"><div class="a" style="left:2.5px;top:2px;width:11px;height:10px;background:#b55d4b;border-radius:1.5px"></div><svg class="a" style="left:3.5px;top:3px" width="9" height="8" viewBox="0 0 9 8"><path d="M0.5 7 L2.5 1 L4.5 7 M1.2 5 H3.8" fill="none" stroke="#f6ece8" stroke-width="0.9"/><path d="M5.5 2.5 H8.5 M5.5 4.5 H8.5 M5.5 6.5 H8.5 M7 2.5 V7" fill="none" stroke="#f6ece8" stroke-width="0.7"/></svg><div class="a" style="left:15px;top:2px;white-space:nowrap;line-height:1;font-size:8.3px;color:#fbefec"><span style="display:inline-block;background:#b55d4b;border-radius:1.5px;padding:1.3px 1.5px 0 0.9px;height:10px">Introducing the Sweeping Robot, the perfect</span></div></div>
<div class="a" style="left:490px;top:429.4px;width:198.3px;height:13.9px;background:#aa513f;border-radius:2.5px;overflow:hidden"><div class="a" style="left:2.5px;top:2px;width:11px;height:10px;background:#b55d4b;border-radius:1.5px"></div><svg class="a" style="left:3.5px;top:3px" width="9" height="8" viewBox="0 0 9 8"><path d="M0.5 7 L2.5 1 L4.5 7 M1.2 5 H3.8" fill="none" stroke="#f6ece8" stroke-width="0.9"/><path d="M5.5 2.5 H8.5 M5.5 4.5 H8.5 M5.5 6.5 H8.5 M7 2.5 V7" fill="none" stroke="#f6ece8" stroke-width="0.7"/></svg><div class="a" style="left:15px;top:2px;white-space:nowrap;line-height:1;font-size:8.3px;color:#fbefec"><span style="display:inline-block;background:#b55d4b;border-radius:1.5px;padding:1.3px 1.5px 0 0.9px;height:10px">With its advanced intelligent navigation</span></div></div>
<div class="a" style="left:689.5px;top:429.4px;width:198.3px;height:13.9px;background:#aa513f;border-radius:2.5px;overflow:hidden"><div class="a" style="left:2.5px;top:2px;width:11px;height:10px;background:#b55d4b;border-radius:1.5px"></div><svg class="a" style="left:3.5px;top:3px" width="9" height="8" viewBox="0 0 9 8"><path d="M0.5 7 L2.5 1 L4.5 7 M1.2 5 H3.8" fill="none" stroke="#f6ece8" stroke-width="0.9"/><path d="M5.5 2.5 H8.5 M5.5 4.5 H8.5 M5.5 6.5 H8.5 M7 2.5 V7" fill="none" stroke="#f6ece8" stroke-width="0.7"/></svg><div class="a" style="left:15px;top:2px;white-space:nowrap;line-height:1;font-size:8.3px;color:#fbefec"><span style="display:inline-block;background:#b55d4b;border-radius:1.5px;padding:1.3px 1.5px 0 0.9px;height:10px">Plus, it cleans thoroughly without any help from</span></div></div>
<div class="a" style="left:889px;top:429.4px;width:198.3px;height:13.9px;background:#aa513f;border-radius:2.5px;overflow:hidden"><div class="a" style="left:2.5px;top:2px;width:11px;height:10px;background:#b55d4b;border-radius:1.5px"></div><svg class="a" style="left:3.5px;top:3px" width="9" height="8" viewBox="0 0 9 8"><path d="M0.5 7 L2.5 1 L4.5 7 M1.2 5 H3.8" fill="none" stroke="#f6ece8" stroke-width="0.9"/><path d="M5.5 2.5 H8.5 M5.5 4.5 H8.5 M5.5 6.5 H8.5 M7 2.5 V7" fill="none" stroke="#f6ece8" stroke-width="0.7"/></svg><div class="a" style="left:15px;top:2px;white-space:nowrap;line-height:1;font-size:8.3px;color:#fbefec"><span style="display:inline-block;background:#b55d4b;border-radius:1.5px;padding:1.3px 1.5px 0 0.9px;height:10px">Say goodbye to the hassle of cleaning</span></div></div>
<div class="a" style="left:90.9px;top:507px;width:198.3px;height:32px;background:#0c4358;border-radius:2.5px;overflow:hidden"><div class="a" style="left:0;top:15.5px;width:198.3px;height:0.8px;background:#2b6276"></div><svg class="a" style="left:3px;top:2px" width="11" height="10" viewBox="0 0 11 10"><rect x="0.6" y="0.6" width="9.8" height="7.5" rx="1" fill="none" stroke="#e8f0f2" stroke-width="0.9"/><text x="5.5" y="6.6" font-size="5" text-anchor="middle" fill="#e8f0f2" font-family="Liberation Sans" font-weight="700">Aa</text></svg><div class="a" style="left:15px;top:1.5px;white-space:nowrap;line-height:1;font-size:8.3px;color:#e8f2f4"><span style="display:inline-block;background:#1a5166;border-radius:1.5px;padding:1.2px 1.5px 0 1.5px;height:10.5px">Cleaning your house can be a chore, but it does</span></div></div>
<div class="a" style="left:290.5px;top:507px;width:198.3px;height:32px;background:#0c4358;border-radius:2.5px;overflow:hidden"><div class="a" style="left:0;top:15.5px;width:198.3px;height:0.8px;background:#2b6276"></div><svg class="a" style="left:3px;top:2px" width="11" height="10" viewBox="0 0 11 10"><rect x="0.6" y="0.6" width="9.8" height="7.5" rx="1" fill="none" stroke="#e8f0f2" stroke-width="0.9"/><text x="5.5" y="6.6" font-size="5" text-anchor="middle" fill="#e8f0f2" font-family="Liberation Sans" font-weight="700">Aa</text></svg><div class="a" style="left:15px;top:1.5px;white-space:nowrap;line-height:1;font-size:8.3px;color:#e8f2f4"><span style="display:inline-block;background:#1a5166;border-radius:1.5px;padding:1.2px 1.5px 0 1.5px;height:10.5px">Introducing the Sweeping Robot, the perfect</span></div></div>
<div class="a" style="left:490px;top:507px;width:198.3px;height:32px;background:#0c4358;border-radius:2.5px;overflow:hidden"><div class="a" style="left:0;top:15.5px;width:198.3px;height:0.8px;background:#2b6276"></div><svg class="a" style="left:3px;top:2px" width="11" height="10" viewBox="0 0 11 10"><rect x="0.6" y="0.6" width="9.8" height="7.5" rx="1" fill="none" stroke="#e8f0f2" stroke-width="0.9"/><text x="5.5" y="6.6" font-size="5" text-anchor="middle" fill="#e8f0f2" font-family="Liberation Sans" font-weight="700">Aa</text></svg><div class="a" style="left:15px;top:1.5px;white-space:nowrap;line-height:1;font-size:8.3px;color:#e8f2f4"><span style="display:inline-block;background:#1a5166;border-radius:1.5px;padding:1.2px 1.5px 0 1.5px;height:10.5px">With its advanced intelligent navigation</span></div></div>
<div class="a" style="left:689.5px;top:507px;width:198.3px;height:32px;background:#0c4358;border-radius:2.5px;overflow:hidden"><div class="a" style="left:0;top:15.5px;width:198.3px;height:0.8px;background:#2b6276"></div><svg class="a" style="left:3px;top:2px" width="11" height="10" viewBox="0 0 11 10"><rect x="0.6" y="0.6" width="9.8" height="7.5" rx="1" fill="none" stroke="#e8f0f2" stroke-width="0.9"/><text x="5.5" y="6.6" font-size="5" text-anchor="middle" fill="#e8f0f2" font-family="Liberation Sans" font-weight="700">Aa</text></svg><div class="a" style="left:15px;top:1.5px;white-space:nowrap;line-height:1;font-size:8.3px;color:#e8f2f4"><span style="display:inline-block;background:#1a5166;border-radius:1.5px;padding:1.2px 1.5px 0 1.5px;height:10.5px">Plus, it cleans thoroughly without any help from</span></div></div>
<div class="a" style="left:889px;top:507px;width:198.3px;height:32px;background:#0c4358;border-radius:2.5px;overflow:hidden"><div class="a" style="left:0;top:15.5px;width:198.3px;height:0.8px;background:#2b6276"></div><svg class="a" style="left:3px;top:2px" width="11" height="10" viewBox="0 0 11 10"><rect x="0.6" y="0.6" width="9.8" height="7.5" rx="1" fill="none" stroke="#e8f0f2" stroke-width="0.9"/><text x="5.5" y="6.6" font-size="5" text-anchor="middle" fill="#e8f0f2" font-family="Liberation Sans" font-weight="700">Aa</text></svg><div class="a" style="left:15px;top:1.5px;white-space:nowrap;line-height:1;font-size:8.3px;color:#e8f2f4"><span style="display:inline-block;background:#1a5166;border-radius:1.5px;padding:1.2px 1.5px 0 1.5px;height:10.5px">Say goodbye to the hassle of cleaning</span></div></div>
<div class="a" style="left:90.9px;top:449.8px;width:198.3px;height:50.7px;background:#0d4f57;border-radius:2.5px;overflow:hidden"><div class="a" style="left:0;top:12.6px;width:198.3px;height:27px;overflow:hidden"><svg class="a" style="left:0.0px;top:0" width="35.7" height="27" viewBox="0 0 35.7 27"><rect width="36" height="27" fill="#f3f3f1"/><rect x="6.5" y="0" width="1" height="17" fill="#7f8a94"/><rect x="21" y="0" width="11" height="19" fill="#e2d6c0"/><rect x="22" y="3" width="9" height="1" fill="#8a7a5a"/><rect x="22" y="8" width="9" height="1" fill="#8a7a5a"/><rect x="23" y="5" width="3" height="3" fill="#444"/><rect x="30" y="10" width="6" height="14" fill="#c9a070"/><rect x="2" y="11" width="18" height="2" fill="#e6dccc"/><rect x="12" y="12" width="1.6" height="9" fill="#2a2a2a"/><rect x="19" y="5" width="5" height="9" rx="1.5" fill="#8fb2d8"/><circle cx="21" cy="4.5" r="1.5" fill="#e0c0a0"/><rect x="20" y="14" width="4" height="8" fill="#e8dcc8"/><rect x="22" y="14" width="7" height="7" fill="#c8ccd4" opacity="0.8"/><path d="M20 13 L14 24" stroke="#333" stroke-width="0.9"/><rect x="12" y="23" width="4" height="2" fill="#2a3a5a"/><circle cx="26" cy="21.5" r="2.6" fill="#2a4a8c"/><rect x="25" y="22" width="11" height="5" fill="#d8c4a4" opacity="0.7"/></svg><svg class="a" style="left:35.7px;top:0" width="35.7" height="27" viewBox="0 0 35.7 27"><rect width="36" height="27" fill="#f3f3f1"/><rect x="6.5" y="0" width="1" height="17" fill="#7f8a94"/><rect x="21" y="0" width="11" height="19" fill="#e2d6c0"/><rect x="22" y="3" width="9" height="1" fill="#8a7a5a"/><rect x="22" y="8" width="9" height="1" fill="#8a7a5a"/><rect x="23" y="5" width="3" height="3" fill="#444"/><rect x="30" y="10" width="6" height="14" fill="#c9a070"/><rect x="2" y="11" width="18" height="2" fill="#e6dccc"/><rect x="12" y="12" width="1.6" height="9" fill="#2a2a2a"/><rect x="19" y="5" width="5" height="9" rx="1.5" fill="#8fb2d8"/><circle cx="21" cy="4.5" r="1.5" fill="#e0c0a0"/><rect x="20" y="14" width="4" height="8" fill="#e8dcc8"/><rect x="22" y="14" width="7" height="7" fill="#c8ccd4" opacity="0.8"/><path d="M20 13 L14 24" stroke="#333" stroke-width="0.9"/><rect x="12" y="23" width="4" height="2" fill="#2a3a5a"/><circle cx="26" cy="21.5" r="2.6" fill="#2a4a8c"/><rect x="25" y="22" width="11" height="5" fill="#d8c4a4" opacity="0.7"/></svg><svg class="a" style="left:71.4px;top:0" width="35.7" height="27" viewBox="0 0 35.7 27"><rect width="36" height="27" fill="#f3f3f1"/><rect x="6.5" y="0" width="1" height="17" fill="#7f8a94"/><rect x="21" y="0" width="11" height="19" fill="#e2d6c0"/><rect x="22" y="3" width="9" height="1" fill="#8a7a5a"/><rect x="22" y="8" width="9" height="1" fill="#8a7a5a"/><rect x="23" y="5" width="3" height="3" fill="#444"/><rect x="30" y="10" width="6" height="14" fill="#c9a070"/><rect x="2" y="11" width="18" height="2" fill="#e6dccc"/><rect x="12" y="12" width="1.6" height="9" fill="#2a2a2a"/><rect x="19" y="5" width="5" height="9" rx="1.5" fill="#8fb2d8"/><circle cx="21" cy="4.5" r="1.5" fill="#e0c0a0"/><rect x="20" y="14" width="4" height="8" fill="#e8dcc8"/><rect x="22" y="14" width="7" height="7" fill="#c8ccd4" opacity="0.8"/><path d="M20 13 L14 24" stroke="#333" stroke-width="0.9"/><rect x="12" y="23" width="4" height="2" fill="#2a3a5a"/><circle cx="26" cy="21.5" r="2.6" fill="#2a4a8c"/><rect x="25" y="22" width="11" height="5" fill="#d8c4a4" opacity="0.7"/></svg><svg class="a" style="left:107.10000000000001px;top:0" width="35.7" height="27" viewBox="0 0 35.7 27"><rect width="36" height="27" fill="#f3f3f1"/><rect x="6.5" y="0" width="1" height="17" fill="#7f8a94"/><rect x="21" y="0" width="11" height="19" fill="#e2d6c0"/><rect x="22" y="3" width="9" height="1" fill="#8a7a5a"/><rect x="22" y="8" width="9" height="1" fill="#8a7a5a"/><rect x="23" y="5" width="3" height="3" fill="#444"/><rect x="30" y="10" width="6" height="14" fill="#c9a070"/><rect x="2" y="11" width="18" height="2" fill="#e6dccc"/><rect x="12" y="12" width="1.6" height="9" fill="#2a2a2a"/><rect x="19" y="5" width="5" height="9" rx="1.5" fill="#8fb2d8"/><circle cx="21" cy="4.5" r="1.5" fill="#e0c0a0"/><rect x="20" y="14" width="4" height="8" fill="#e8dcc8"/><rect x="22" y="14" width="7" height="7" fill="#c8ccd4" opacity="0.8"/><path d="M20 13 L14 24" stroke="#333" stroke-width="0.9"/><rect x="12" y="23" width="4" height="2" fill="#2a3a5a"/><circle cx="26" cy="21.5" r="2.6" fill="#2a4a8c"/><rect x="25" y="22" width="11" height="5" fill="#d8c4a4" opacity="0.7"/></svg><svg class="a" style="left:142.8px;top:0" width="35.7" height="27" viewBox="0 0 35.7 27"><rect width="36" height="27" fill="#f3f3f1"/><rect x="6.5" y="0" width="1" height="17" fill="#7f8a94"/><rect x="21" y="0" width="11" height="19" fill="#e2d6c0"/><rect x="22" y="3" width="9" height="1" fill="#8a7a5a"/><rect x="22" y="8" width="9" height="1" fill="#8a7a5a"/><rect x="23" y="5" width="3" height="3" fill="#444"/><rect x="30" y="10" width="6" height="14" fill="#c9a070"/><rect x="2" y="11" width="18" height="2" fill="#e6dccc"/><rect x="12" y="12" width="1.6" height="9" fill="#2a2a2a"/><rect x="19" y="5" width="5" height="9" rx="1.5" fill="#8fb2d8"/><circle cx="21" cy="4.5" r="1.5" fill="#e0c0a0"/><rect x="20" y="14" width="4" height="8" fill="#e8dcc8"/><rect x="22" y="14" width="7" height="7" fill="#c8ccd4" opacity="0.8"/><path d="M20 13 L14 24" stroke="#333" stroke-width="0.9"/><rect x="12" y="23" width="4" height="2" fill="#2a3a5a"/><circle cx="26" cy="21.5" r="2.6" fill="#2a4a8c"/><rect x="25" y="22" width="11" height="5" fill="#d8c4a4" opacity="0.7"/></svg><svg class="a" style="left:178.5px;top:0" width="35.7" height="27" viewBox="0 0 35.7 27"><rect width="36" height="27" fill="#f3f3f1"/><rect x="6.5" y="0" width="1" height="17" fill="#7f8a94"/><rect x="21" y="0" width="11" height="19" fill="#e2d6c0"/><rect x="22" y="3" width="9" height="1" fill="#8a7a5a"/><rect x="22" y="8" width="9" height="1" fill="#8a7a5a"/><rect x="23" y="5" width="3" height="3" fill="#444"/><rect x="30" y="10" width="6" height="14" fill="#c9a070"/><rect x="2" y="11" width="18" height="2" fill="#e6dccc"/><rect x="12" y="12" width="1.6" height="9" fill="#2a2a2a"/><rect x="19" y="5" width="5" height="9" rx="1.5" fill="#8fb2d8"/><circle cx="21" cy="4.5" r="1.5" fill="#e0c0a0"/><rect x="20" y="14" width="4" height="8" fill="#e8dcc8"/><rect x="22" y="14" width="7" height="7" fill="#c8ccd4" opacity="0.8"/><path d="M20 13 L14 24" stroke="#333" stroke-width="0.9"/><rect x="12" y="23" width="4" height="2" fill="#2a3a5a"/><circle cx="26" cy="21.5" r="2.6" fill="#2a4a8c"/><rect x="25" y="22" width="11" height="5" fill="#d8c4a4" opacity="0.7"/></svg></div><div class="a" style="left:2.5px;top:1.2px;white-space:nowrap;line-height:1;font-size:8.5px;color:#eef6f6"><span style="display:inline-block;background:#1a5b62;border-radius:1.5px;padding:1px 2px 0 2px;height:10.5px">getty-images-yAPS-U5ODbo-unsplash.jpg</span><span style="display:inline-block;background:#1a5b62;border-radius:1.5px;padding:1px 2px 0 2px;height:10.5px;margin-left:3px">00:00:01</span></div><div class="a" style="left:0;top:0;width:198.3px;height:50.7px;border-radius:2.5px;"></div></div>
<div class="a" style="left:290.5px;top:449.8px;width:263.7px;height:50.7px;background:#0d4f57;border-radius:2.5px;overflow:hidden"><div class="a" style="left:0;top:12.6px;width:263.7px;height:27px;overflow:hidden"><svg class="a" style="left:0.0px;top:0" width="35.7" height="27" viewBox="0 0 35.7 27"><rect width="36" height="27" fill="#e6e8ea"/><rect x="0" y="0" width="4" height="27" fill="#c8d0d8"/><rect x="10" y="14" width="26" height="2" fill="#cfd6dc"/><rect x="0" y="19" width="36" height="8" fill="#c9a27a"/><circle cx="8" cy="3" r="2.5" fill="#4e8a3a"/><circle cx="6" cy="8" r="2.5" fill="#5a9a42"/><circle cx="9" cy="12" r="2.2" fill="#4e8a3a"/><circle cx="4" cy="22" r="4" fill="#4e8a3a"/><circle cx="10" cy="24" r="3.5" fill="#5a9a42"/><rect x="13" y="10" width="1.5" height="10" fill="#333"/><rect x="17" y="10" width="1.5" height="10" fill="#333"/><rect x="12" y="13" width="8" height="2" fill="#444"/><circle cx="26" cy="7.5" r="1.8" fill="#2a2020"/><rect x="25" y="9" width="5" height="6" rx="1.2" fill="#e8a4c4"/><rect x="26" y="15" width="4" height="8" fill="#f2eee8"/><path d="M25 13 L18 24" stroke="#6a7080" stroke-width="0.8"/><rect x="16" y="23" width="4" height="2" fill="#505a70"/></svg><svg class="a" style="left:35.7px;top:0" width="35.7" height="27" viewBox="0 0 35.7 27"><rect width="36" height="27" fill="#e6e8ea"/><rect x="0" y="0" width="4" height="27" fill="#c8d0d8"/><rect x="10" y="14" width="26" height="2" fill="#cfd6dc"/><rect x="0" y="19" width="36" height="8" fill="#c9a27a"/><circle cx="8" cy="3" r="2.5" fill="#4e8a3a"/><circle cx="6" cy="8" r="2.5" fill="#5a9a42"/><circle cx="9" cy="12" r="2.2" fill="#4e8a3a"/><circle cx="4" cy="22" r="4" fill="#4e8a3a"/><circle cx="10" cy="24" r="3.5" fill="#5a9a42"/><rect x="13" y="10" width="1.5" height="10" fill="#333"/><rect x="17" y="10" width="1.5" height="10" fill="#333"/><rect x="12" y="13" width="8" height="2" fill="#444"/><circle cx="26" cy="7.5" r="1.8" fill="#2a2020"/><rect x="25" y="9" width="5" height="6" rx="1.2" fill="#e8a4c4"/><rect x="26" y="15" width="4" height="8" fill="#f2eee8"/><path d="M25 13 L18 24" stroke="#6a7080" stroke-width="0.8"/><rect x="16" y="23" width="4" height="2" fill="#505a70"/></svg><svg class="a" style="left:71.4px;top:0" width="35.7" height="27" viewBox="0 0 35.7 27"><rect width="36" height="27" fill="#e6e8ea"/><rect x="0" y="0" width="4" height="27" fill="#c8d0d8"/><rect x="10" y="14" width="26" height="2" fill="#cfd6dc"/><rect x="0" y="19" width="36" height="8" fill="#c9a27a"/><circle cx="8" cy="3" r="2.5" fill="#4e8a3a"/><circle cx="6" cy="8" r="2.5" fill="#5a9a42"/><circle cx="9" cy="12" r="2.2" fill="#4e8a3a"/><circle cx="4" cy="22" r="4" fill="#4e8a3a"/><circle cx="10" cy="24" r="3.5" fill="#5a9a42"/><rect x="13" y="10" width="1.5" height="10" fill="#333"/><rect x="17" y="10" width="1.5" height="10" fill="#333"/><rect x="12" y="13" width="8" height="2" fill="#444"/><circle cx="26" cy="7.5" r="1.8" fill="#2a2020"/><rect x="25" y="9" width="5" height="6" rx="1.2" fill="#e8a4c4"/><rect x="26" y="15" width="4" height="8" fill="#f2eee8"/><path d="M25 13 L18 24" stroke="#6a7080" stroke-width="0.8"/><rect x="16" y="23" width="4" height="2" fill="#505a70"/></svg><svg class="a" style="left:107.10000000000001px;top:0" width="35.7" height="27" viewBox="0 0 35.7 27"><rect width="36" height="27" fill="#e6e8ea"/><rect x="0" y="0" width="4" height="27" fill="#c8d0d8"/><rect x="10" y="14" width="26" height="2" fill="#cfd6dc"/><rect x="0" y="19" width="36" height="8" fill="#c9a27a"/><circle cx="8" cy="3" r="2.5" fill="#4e8a3a"/><circle cx="6" cy="8" r="2.5" fill="#5a9a42"/><circle cx="9" cy="12" r="2.2" fill="#4e8a3a"/><circle cx="4" cy="22" r="4" fill="#4e8a3a"/><circle cx="10" cy="24" r="3.5" fill="#5a9a42"/><rect x="13" y="10" width="1.5" height="10" fill="#333"/><rect x="17" y="10" width="1.5" height="10" fill="#333"/><rect x="12" y="13" width="8" height="2" fill="#444"/><circle cx="26" cy="7.5" r="1.8" fill="#2a2020"/><rect x="25" y="9" width="5" height="6" rx="1.2" fill="#e8a4c4"/><rect x="26" y="15" width="4" height="8" fill="#f2eee8"/><path d="M25 13 L18 24" stroke="#6a7080" stroke-width="0.8"/><rect x="16" y="23" width="4" height="2" fill="#505a70"/></svg><svg class="a" style="left:142.8px;top:0" width="35.7" height="27" viewBox="0 0 35.7 27"><rect width="36" height="27" fill="#e6e8ea"/><rect x="0" y="0" width="4" height="27" fill="#c8d0d8"/><rect x="10" y="14" width="26" height="2" fill="#cfd6dc"/><rect x="0" y="19" width="36" height="8" fill="#c9a27a"/><circle cx="8" cy="3" r="2.5" fill="#4e8a3a"/><circle cx="6" cy="8" r="2.5" fill="#5a9a42"/><circle cx="9" cy="12" r="2.2" fill="#4e8a3a"/><circle cx="4" cy="22" r="4" fill="#4e8a3a"/><circle cx="10" cy="24" r="3.5" fill="#5a9a42"/><rect x="13" y="10" width="1.5" height="10" fill="#333"/><rect x="17" y="10" width="1.5" height="10" fill="#333"/><rect x="12" y="13" width="8" height="2" fill="#444"/><circle cx="26" cy="7.5" r="1.8" fill="#2a2020"/><rect x="25" y="9" width="5" height="6" rx="1.2" fill="#e8a4c4"/><rect x="26" y="15" width="4" height="8" fill="#f2eee8"/><path d="M25 13 L18 24" stroke="#6a7080" stroke-width="0.8"/><rect x="16" y="23" width="4" height="2" fill="#505a70"/></svg><svg class="a" style="left:178.5px;top:0" width="35.7" height="27" viewBox="0 0 35.7 27"><rect width="36" height="27" fill="#e6e8ea"/><rect x="0" y="0" width="4" height="27" fill="#c8d0d8"/><rect x="10" y="14" width="26" height="2" fill="#cfd6dc"/><rect x="0" y="19" width="36" height="8" fill="#c9a27a"/><circle cx="8" cy="3" r="2.5" fill="#4e8a3a"/><circle cx="6" cy="8" r="2.5" fill="#5a9a42"/><circle cx="9" cy="12" r="2.2" fill="#4e8a3a"/><circle cx="4" cy="22" r="4" fill="#4e8a3a"/><circle cx="10" cy="24" r="3.5" fill="#5a9a42"/><rect x="13" y="10" width="1.5" height="10" fill="#333"/><rect x="17" y="10" width="1.5" height="10" fill="#333"/><rect x="12" y="13" width="8" height="2" fill="#444"/><circle cx="26" cy="7.5" r="1.8" fill="#2a2020"/><rect x="25" y="9" width="5" height="6" rx="1.2" fill="#e8a4c4"/><rect x="26" y="15" width="4" height="8" fill="#f2eee8"/><path d="M25 13 L18 24" stroke="#6a7080" stroke-width="0.8"/><rect x="16" y="23" width="4" height="2" fill="#505a70"/></svg><svg class="a" style="left:214.20000000000002px;top:0" width="35.7" height="27" viewBox="0 0 35.7 27"><rect width="36" height="27" fill="#e6e8ea"/><rect x="0" y="0" width="4" height="27" fill="#c8d0d8"/><rect x="10" y="14" width="26" height="2" fill="#cfd6dc"/><rect x="0" y="19" width="36" height="8" fill="#c9a27a"/><circle cx="8" cy="3" r="2.5" fill="#4e8a3a"/><circle cx="6" cy="8" r="2.5" fill="#5a9a42"/><circle cx="9" cy="12" r="2.2" fill="#4e8a3a"/><circle cx="4" cy="22" r="4" fill="#4e8a3a"/><circle cx="10" cy="24" r="3.5" fill="#5a9a42"/><rect x="13" y="10" width="1.5" height="10" fill="#333"/><rect x="17" y="10" width="1.5" height="10" fill="#333"/><rect x="12" y="13" width="8" height="2" fill="#444"/><circle cx="26" cy="7.5" r="1.8" fill="#2a2020"/><rect x="25" y="9" width="5" height="6" rx="1.2" fill="#e8a4c4"/><rect x="26" y="15" width="4" height="8" fill="#f2eee8"/><path d="M25 13 L18 24" stroke="#6a7080" stroke-width="0.8"/><rect x="16" y="23" width="4" height="2" fill="#505a70"/></svg><svg class="a" style="left:249.90000000000003px;top:0" width="35.7" height="27" viewBox="0 0 35.7 27"><rect width="36" height="27" fill="#e6e8ea"/><rect x="0" y="0" width="4" height="27" fill="#c8d0d8"/><rect x="10" y="14" width="26" height="2" fill="#cfd6dc"/><rect x="0" y="19" width="36" height="8" fill="#c9a27a"/><circle cx="8" cy="3" r="2.5" fill="#4e8a3a"/><circle cx="6" cy="8" r="2.5" fill="#5a9a42"/><circle cx="9" cy="12" r="2.2" fill="#4e8a3a"/><circle cx="4" cy="22" r="4" fill="#4e8a3a"/><circle cx="10" cy="24" r="3.5" fill="#5a9a42"/><rect x="13" y="10" width="1.5" height="10" fill="#333"/><rect x="17" y="10" width="1.5" height="10" fill="#333"/><rect x="12" y="13" width="8" height="2" fill="#444"/><circle cx="26" cy="7.5" r="1.8" fill="#2a2020"/><rect x="25" y="9" width="5" height="6" rx="1.2" fill="#e8a4c4"/><rect x="26" y="15" width="4" height="8" fill="#f2eee8"/><path d="M25 13 L18 24" stroke="#6a7080" stroke-width="0.8"/><rect x="16" y="23" width="4" height="2" fill="#505a70"/></svg></div><div class="a" style="left:2.5px;top:1.2px;white-space:nowrap;line-height:1;font-size:8.5px;color:#eef6f6"><span style="display:inline-block;background:#1a5b62;border-radius:1.5px;padding:1px 2px 0 2px;height:10.5px">getty-images-e9VvJFLE34I-unsplash.jpg</span><span style="display:inline-block;background:#1a5b62;border-radius:1.5px;padding:1px 2px 0 2px;height:10.5px;margin-left:3px">00:00:01:10</span></div><div class="a" style="left:0;top:0;width:263.7px;height:50.7px;border-radius:2.5px;"></div></div>
<div class="a" style="left:555.3px;top:449.8px;width:354.5px;height:50.7px;background:#0d4f57;border-radius:2.5px;overflow:hidden"><div class="a" style="left:0;top:12.6px;width:354.5px;height:27px;overflow:hidden"><svg class="a" style="left:0.0px;top:0" width="35.7" height="27" viewBox="0 0 35.7 27"><rect width="36" height="27" fill="#dcdee0"/><rect x="20" y="0" width="9" height="13" fill="#f8f8f8"/><rect x="0" y="13" width="36" height="5" fill="#2e4258"/><rect x="0" y="18" width="36" height="9" fill="#a89a88"/><rect x="4" y="19" width="28" height="6" fill="#b8b8b4"/><rect x="0" y="2" width="6" height="15" fill="none" stroke="#333" stroke-width="0.7"/><path d="M5 6 L6 18 L8 6 Z" fill="#4e8a3a"/><rect x="4" y="17" width="4" height="4" fill="#b09060"/><rect x="10" y="5" width="4" height="9" rx="1" fill="#a8c0d8"/><circle cx="12" cy="4" r="1.4" fill="#a07850"/><rect x="10" y="14" width="4" height="9" fill="#90aecc"/><path d="M13 14 L19 24" stroke="#7a5ad0" stroke-width="0.8"/><rect x="17" y="10" width="6" height="6" fill="#a88a70"/><circle cx="20" cy="9" r="1.5" fill="#2a2020"/><rect x="17" y="16" width="6" height="5" fill="#1a1a1a"/><rect x="26" y="4" width="7" height="11" fill="none" stroke="#333" stroke-width="0.6"/><rect x="26" y="10" width="7" height="4" fill="#a98257"/></svg><svg class="a" style="left:35.7px;top:0" width="35.7" height="27" viewBox="0 0 35.7 27"><rect width="36" height="27" fill="#dcdee0"/><rect x="20" y="0" width="9" height="13" fill="#f8f8f8"/><rect x="0" y="13" width="36" height="5" fill="#2e4258"/><rect x="0" y="18" width="36" height="9" fill="#a89a88"/><rect x="4" y="19" width="28" height="6" fill="#b8b8b4"/><rect x="0" y="2" width="6" height="15" fill="none" stroke="#333" stroke-width="0.7"/><path d="M5 6 L6 18 L8 6 Z" fill="#4e8a3a"/><rect x="4" y="17" width="4" height="4" fill="#b09060"/><rect x="10" y="5" width="4" height="9" rx="1" fill="#a8c0d8"/><circle cx="12" cy="4" r="1.4" fill="#a07850"/><rect x="10" y="14" width="4" height="9" fill="#90aecc"/><path d="M13 14 L19 24" stroke="#7a5ad0" stroke-width="0.8"/><rect x="17" y="10" width="6" height="6" fill="#a88a70"/><circle cx="20" cy="9" r="1.5" fill="#2a2020"/><rect x="17" y="16" width="6" height="5" fill="#1a1a1a"/><rect x="26" y="4" width="7" height="11" fill="none" stroke="#333" stroke-width="0.6"/><rect x="26" y="10" width="7" height="4" fill="#a98257"/></svg><svg class="a" style="left:71.4px;top:0" width="35.7" height="27" viewBox="0 0 35.7 27"><rect width="36" height="27" fill="#dcdee0"/><rect x="20" y="0" width="9" height="13" fill="#f8f8f8"/><rect x="0" y="13" width="36" height="5" fill="#2e4258"/><rect x="0" y="18" width="36" height="9" fill="#a89a88"/><rect x="4" y="19" width="28" height="6" fill="#b8b8b4"/><rect x="0" y="2" width="6" height="15" fill="none" stroke="#333" stroke-width="0.7"/><path d="M5 6 L6 18 L8 6 Z" fill="#4e8a3a"/><rect x="4" y="17" width="4" height="4" fill="#b09060"/><rect x="10" y="5" width="4" height="9" rx="1" fill="#a8c0d8"/><circle cx="12" cy="4" r="1.4" fill="#a07850"/><rect x="10" y="14" width="4" height="9" fill="#90aecc"/><path d="M13 14 L19 24" stroke="#7a5ad0" stroke-width="0.8"/><rect x="17" y="10" width="6" height="6" fill="#a88a70"/><circle cx="20" cy="9" r="1.5" fill="#2a2020"/><rect x="17" y="16" width="6" height="5" fill="#1a1a1a"/><rect x="26" y="4" width="7" height="11" fill="none" stroke="#333" stroke-width="0.6"/><rect x="26" y="10" width="7" height="4" fill="#a98257"/></svg><svg class="a" style="left:107.10000000000001px;top:0" width="35.7" height="27" viewBox="0 0 35.7 27"><rect width="36" height="27" fill="#dcdee0"/><rect x="20" y="0" width="9" height="13" fill="#f8f8f8"/><rect x="0" y="13" width="36" height="5" fill="#2e4258"/><rect x="0" y="18" width="36" height="9" fill="#a89a88"/><rect x="4" y="19" width="28" height="6" fill="#b8b8b4"/><rect x="0" y="2" width="6" height="15" fill="none" stroke="#333" stroke-width="0.7"/><path d="M5 6 L6 18 L8 6 Z" fill="#4e8a3a"/><rect x="4" y="17" width="4" height="4" fill="#b09060"/><rect x="10" y="5" width="4" height="9" rx="1" fill="#a8c0d8"/><circle cx="12" cy="4" r="1.4" fill="#a07850"/><rect x="10" y="14" width="4" height="9" fill="#90aecc"/><path d="M13 14 L19 24" stroke="#7a5ad0" stroke-width="0.8"/><rect x="17" y="10" width="6" height="6" fill="#a88a70"/><circle cx="20" cy="9" r="1.5" fill="#2a2020"/><rect x="17" y="16" width="6" height="5" fill="#1a1a1a"/><rect x="26" y="4" width="7" height="11" fill="none" stroke="#333" stroke-width="0.6"/><rect x="26" y="10" width="7" height="4" fill="#a98257"/></svg><svg class="a" style="left:142.8px;top:0" width="35.7" height="27" viewBox="0 0 35.7 27"><rect width="36" height="27" fill="#dcdee0"/><rect x="20" y="0" width="9" height="13" fill="#f8f8f8"/><rect x="0" y="13" width="36" height="5" fill="#2e4258"/><rect x="0" y="18" width="36" height="9" fill="#a89a88"/><rect x="4" y="19" width="28" height="6" fill="#b8b8b4"/><rect x="0" y="2" width="6" height="15" fill="none" stroke="#333" stroke-width="0.7"/><path d="M5 6 L6 18 L8 6 Z" fill="#4e8a3a"/><rect x="4" y="17" width="4" height="4" fill="#b09060"/><rect x="10" y="5" width="4" height="9" rx="1" fill="#a8c0d8"/><circle cx="12" cy="4" r="1.4" fill="#a07850"/><rect x="10" y="14" width="4" height="9" fill="#90aecc"/><path d="M13 14 L19 24" stroke="#7a5ad0" stroke-width="0.8"/><rect x="17" y="10" width="6" height="6" fill="#a88a70"/><circle cx="20" cy="9" r="1.5" fill="#2a2020"/><rect x="17" y="16" width="6" height="5" fill="#1a1a1a"/><rect x="26" y="4" width="7" height="11" fill="none" stroke="#333" stroke-width="0.6"/><rect x="26" y="10" width="7" height="4" fill="#a98257"/></svg><svg class="a" style="left:178.5px;top:0" width="35.7" height="27" viewBox="0 0 35.7 27"><rect width="36" height="27" fill="#dcdee0"/><rect x="20" y="0" width="9" height="13" fill="#f8f8f8"/><rect x="0" y="13" width="36" height="5" fill="#2e4258"/><rect x="0" y="18" width="36" height="9" fill="#a89a88"/><rect x="4" y="19" width="28" height="6" fill="#b8b8b4"/><rect x="0" y="2" width="6" height="15" fill="none" stroke="#333" stroke-width="0.7"/><path d="M5 6 L6 18 L8 6 Z" fill="#4e8a3a"/><rect x="4" y="17" width="4" height="4" fill="#b09060"/><rect x="10" y="5" width="4" height="9" rx="1" fill="#a8c0d8"/><circle cx="12" cy="4" r="1.4" fill="#a07850"/><rect x="10" y="14" width="4" height="9" fill="#90aecc"/><path d="M13 14 L19 24" stroke="#7a5ad0" stroke-width="0.8"/><rect x="17" y="10" width="6" height="6" fill="#a88a70"/><circle cx="20" cy="9" r="1.5" fill="#2a2020"/><rect x="17" y="16" width="6" height="5" fill="#1a1a1a"/><rect x="26" y="4" width="7" height="11" fill="none" stroke="#333" stroke-width="0.6"/><rect x="26" y="10" width="7" height="4" fill="#a98257"/></svg><svg class="a" style="left:214.20000000000002px;top:0" width="35.7" height="27" viewBox="0 0 35.7 27"><rect width="36" height="27" fill="#dcdee0"/><rect x="20" y="0" width="9" height="13" fill="#f8f8f8"/><rect x="0" y="13" width="36" height="5" fill="#2e4258"/><rect x="0" y="18" width="36" height="9" fill="#a89a88"/><rect x="4" y="19" width="28" height="6" fill="#b8b8b4"/><rect x="0" y="2" width="6" height="15" fill="none" stroke="#333" stroke-width="0.7"/><path d="M5 6 L6 18 L8 6 Z" fill="#4e8a3a"/><rect x="4" y="17" width="4" height="4" fill="#b09060"/><rect x="10" y="5" width="4" height="9" rx="1" fill="#a8c0d8"/><circle cx="12" cy="4" r="1.4" fill="#a07850"/><rect x="10" y="14" width="4" height="9" fill="#90aecc"/><path d="M13 14 L19 24" stroke="#7a5ad0" stroke-width="0.8"/><rect x="17" y="10" width="6" height="6" fill="#a88a70"/><circle cx="20" cy="9" r="1.5" fill="#2a2020"/><rect x="17" y="16" width="6" height="5" fill="#1a1a1a"/><rect x="26" y="4" width="7" height="11" fill="none" stroke="#333" stroke-width="0.6"/><rect x="26" y="10" width="7" height="4" fill="#a98257"/></svg><svg class="a" style="left:249.90000000000003px;top:0" width="35.7" height="27" viewBox="0 0 35.7 27"><rect width="36" height="27" fill="#dcdee0"/><rect x="20" y="0" width="9" height="13" fill="#f8f8f8"/><rect x="0" y="13" width="36" height="5" fill="#2e4258"/><rect x="0" y="18" width="36" height="9" fill="#a89a88"/><rect x="4" y="19" width="28" height="6" fill="#b8b8b4"/><rect x="0" y="2" width="6" height="15" fill="none" stroke="#333" stroke-width="0.7"/><path d="M5 6 L6 18 L8 6 Z" fill="#4e8a3a"/><rect x="4" y="17" width="4" height="4" fill="#b09060"/><rect x="10" y="5" width="4" height="9" rx="1" fill="#a8c0d8"/><circle cx="12" cy="4" r="1.4" fill="#a07850"/><rect x="10" y="14" width="4" height="9" fill="#90aecc"/><path d="M13 14 L19 24" stroke="#7a5ad0" stroke-width="0.8"/><rect x="17" y="10" width="6" height="6" fill="#a88a70"/><circle cx="20" cy="9" r="1.5" fill="#2a2020"/><rect x="17" y="16" width="6" height="5" fill="#1a1a1a"/><rect x="26" y="4" width="7" height="11" fill="none" stroke="#333" stroke-width="0.6"/><rect x="26" y="10" width="7" height="4" fill="#a98257"/></svg><svg class="a" style="left:285.6px;top:0" width="35.7" height="27" viewBox="0 0 35.7 27"><rect width="36" height="27" fill="#dcdee0"/><rect x="20" y="0" width="9" height="13" fill="#f8f8f8"/><rect x="0" y="13" width="36" height="5" fill="#2e4258"/><rect x="0" y="18" width="36" height="9" fill="#a89a88"/><rect x="4" y="19" width="28" height="6" fill="#b8b8b4"/><rect x="0" y="2" width="6" height="15" fill="none" stroke="#333" stroke-width="0.7"/><path d="M5 6 L6 18 L8 6 Z" fill="#4e8a3a"/><rect x="4" y="17" width="4" height="4" fill="#b09060"/><rect x="10" y="5" width="4" height="9" rx="1" fill="#a8c0d8"/><circle cx="12" cy="4" r="1.4" fill="#a07850"/><rect x="10" y="14" width="4" height="9" fill="#90aecc"/><path d="M13 14 L19 24" stroke="#7a5ad0" stroke-width="0.8"/><rect x="17" y="10" width="6" height="6" fill="#a88a70"/><circle cx="20" cy="9" r="1.5" fill="#2a2020"/><rect x="17" y="16" width="6" height="5" fill="#1a1a1a"/><rect x="26" y="4" width="7" height="11" fill="none" stroke="#333" stroke-width="0.6"/><rect x="26" y="10" width="7" height="4" fill="#a98257"/></svg><svg class="a" style="left:321.3px;top:0" width="35.7" height="27" viewBox="0 0 35.7 27"><rect width="36" height="27" fill="#dcdee0"/><rect x="20" y="0" width="9" height="13" fill="#f8f8f8"/><rect x="0" y="13" width="36" height="5" fill="#2e4258"/><rect x="0" y="18" width="36" height="9" fill="#a89a88"/><rect x="4" y="19" width="28" height="6" fill="#b8b8b4"/><rect x="0" y="2" width="6" height="15" fill="none" stroke="#333" stroke-width="0.7"/><path d="M5 6 L6 18 L8 6 Z" fill="#4e8a3a"/><rect x="4" y="17" width="4" height="4" fill="#b09060"/><rect x="10" y="5" width="4" height="9" rx="1" fill="#a8c0d8"/><circle cx="12" cy="4" r="1.4" fill="#a07850"/><rect x="10" y="14" width="4" height="9" fill="#90aecc"/><path d="M13 14 L19 24" stroke="#7a5ad0" stroke-width="0.8"/><rect x="17" y="10" width="6" height="6" fill="#a88a70"/><circle cx="20" cy="9" r="1.5" fill="#2a2020"/><rect x="17" y="16" width="6" height="5" fill="#1a1a1a"/><rect x="26" y="4" width="7" height="11" fill="none" stroke="#333" stroke-width="0.6"/><rect x="26" y="10" width="7" height="4" fill="#a98257"/></svg></div><div class="a" style="left:2.5px;top:1.2px;white-space:nowrap;line-height:1;font-size:8.5px;color:#eef6f6"><span style="display:inline-block;background:#1a5b62;border-radius:1.5px;padding:1px 2px 0 2px;height:10.5px">getty-images-vcx9tPgjdxg-unsplash.jpg</span><span style="display:inline-block;background:#1a5b62;border-radius:1.5px;padding:1px 2px 0 2px;height:10.5px;margin-left:3px">00:00:01:23</span></div><div class="a" style="left:0;top:0;width:354.5px;height:50.7px;border-radius:2.5px;box-shadow:inset 0 0 0 1.5px #f2f2f2;"></div></div>
<div class="a" style="left:911px;top:449.8px;width:120px;height:50.7px;background:#0d4f57;border-radius:2.5px;overflow:hidden"><div class="a" style="left:0;top:12.6px;width:120px;height:27px;overflow:hidden"><svg class="a" style="left:0.0px;top:0" width="35.7" height="27" viewBox="0 0 35.7 27"><rect width="36" height="27" fill="#d6dadd"/><rect x="0" y="0" width="36" height="7" fill="#e6e8ea"/><rect x="0" y="8" width="36" height="9" fill="#1f3b5c"/><rect x="0" y="17" width="36" height="10" fill="#a4a8ac"/><rect x="24" y="9" width="8" height="5" fill="#e8e4dc"/><path d="M3 5 L18 25" stroke="#7a5ad0" stroke-width="1.4"/><rect x="2" y="4" width="5" height="14" fill="#8aaacd"/><ellipse cx="27" cy="22" rx="4" ry="2" fill="#222"/></svg><svg class="a" style="left:35.7px;top:0" width="35.7" height="27" viewBox="0 0 35.7 27"><rect width="36" height="27" fill="#d6dadd"/><rect x="0" y="0" width="36" height="7" fill="#e6e8ea"/><rect x="0" y="8" width="36" height="9" fill="#1f3b5c"/><rect x="0" y="17" width="36" height="10" fill="#a4a8ac"/><rect x="24" y="9" width="8" height="5" fill="#e8e4dc"/><path d="M3 5 L18 25" stroke="#7a5ad0" stroke-width="1.4"/><rect x="2" y="4" width="5" height="14" fill="#8aaacd"/><ellipse cx="27" cy="22" rx="4" ry="2" fill="#222"/></svg><svg class="a" style="left:71.4px;top:0" width="35.7" height="27" viewBox="0 0 35.7 27"><rect width="36" height="27" fill="#d6dadd"/><rect x="0" y="0" width="36" height="7" fill="#e6e8ea"/><rect x="0" y="8" width="36" height="9" fill="#1f3b5c"/><rect x="0" y="17" width="36" height="10" fill="#a4a8ac"/><rect x="24" y="9" width="8" height="5" fill="#e8e4dc"/><path d="M3 5 L18 25" stroke="#7a5ad0" stroke-width="1.4"/><rect x="2" y="4" width="5" height="14" fill="#8aaacd"/><ellipse cx="27" cy="22" rx="4" ry="2" fill="#222"/></svg><svg class="a" style="left:107.10000000000001px;top:0" width="35.7" height="27" viewBox="0 0 35.7 27"><rect width="36" height="27" fill="#d6dadd"/><rect x="0" y="0" width="36" height="7" fill="#e6e8ea"/><rect x="0" y="8" width="36" height="9" fill="#1f3b5c"/><rect x="0" y="17" width="36" height="10" fill="#a4a8ac"/><rect x="24" y="9" width="8" height="5" fill="#e8e4dc"/><path d="M3 5 L18 25" stroke="#7a5ad0" stroke-width="1.4"/><rect x="2" y="4" width="5" height="14" fill="#8aaacd"/><ellipse cx="27" cy="22" rx="4" ry="2" fill="#222"/></svg></div><div class="a" style="left:2.5px;top:1.2px;white-space:nowrap;line-height:1;font-size:8.5px;color:#eef6f6"><span style="display:inline-block;background:#1a5b62;border-radius:1.5px;padding:1px 2px 0 2px;height:10.5px">getty-images-P1pQfKznq1U-unsplash.jpg</span><span style="display:inline-block;background:#1a5b62;border-radius:1.5px;padding:1px 2px 0 2px;height:10.5px;margin-left:3px">00:00:01</span></div><div class="a" style="left:0;top:0;width:120px;height:50.7px;border-radius:2.5px;"></div></div>
<div class="a" style="left:90.9px;top:545.4px;width:930px;height:32.7px;background:#10305c;border-radius:2.5px"></div>
<div class="a" style="left:92.5px;top:547.2px;width:120px;height:10.5px;background:#173a66;border-radius:1.5px"></div>
<div class="t" style="left:93px;top:548.5px;font-size:8.2px;color:#e6ecf4">[Animals and dishes] Cute BGM</div>
<div class="a" style="left:92px;top:571.6px;width:924px;height:0.7px;background:#3a6a9a"></div>
<svg class="a" style="left:0;top:0" width="1016" height="600" viewBox="0 0 1016 600"><g fill="#2b8ac4"><rect x="179.0" y="571.9" width="0.9" height="6.2"/><rect x="180.6" y="572.3" width="0.9" height="5.8"/><rect x="182.1" y="571.0" width="0.9" height="7.1"/><rect x="183.7" y="572.5" width="0.9" height="5.6"/><rect x="185.2" y="571.3" width="0.9" height="6.8"/><rect x="186.8" y="571.7" width="0.9" height="6.4"/><rect x="188.3" y="572.5" width="0.9" height="5.6"/><rect x="189.9" y="571.3" width="0.9" height="6.8"/><rect x="191.4" y="572.5" width="0.9" height="5.6"/><rect x="193.0" y="571.5" width="0.9" height="6.6"/><rect x="194.5" y="572.4" width="0.9" height="5.7"/><rect x="196.1" y="572.3" width="0.9" height="5.8"/><rect x="197.6" y="571.5" width="0.9" height="6.6"/><rect x="199.2" y="570.4" width="0.9" height="7.7"/><rect x="200.7" y="572.2" width="0.9" height="5.9"/><rect x="202.3" y="572.0" width="0.9" height="6.1"/><rect x="203.8" y="570.9" width="0.9" height="7.2"/><rect x="205.4" y="570.1" width="0.9" height="8.0"/><rect x="206.9" y="571.0" width="0.9" height="7.1"/><rect x="208.5" y="571.5" width="0.9" height="6.6"/><rect x="210.0" y="569.9" width="0.9" height="8.2"/><rect x="211.6" y="572.4" width="0.9" height="5.7"/><rect x="213.1" y="570.2" width="0.9" height="7.9"/><rect x="214.7" y="571.7" width="0.9" height="6.4"/><rect x="216.2" y="572.1" width="0.9" height="6.0"/><rect x="217.8" y="572.1" width="0.9" height="6.0"/><rect x="219.3" y="571.6" width="0.9" height="6.5"/><rect x="220.9" y="570.3" width="0.9" height="7.8"/><rect x="222.4" y="571.9" width="0.9" height="6.2"/><rect x="224.0" y="570.9" width="0.9" height="7.2"/><rect x="225.5" y="570.7" width="0.9" height="7.4"/><rect x="227.1" y="571.4" width="0.9" height="6.7"/><rect x="228.6" y="570.9" width="0.9" height="7.2"/><rect x="230.2" y="572.2" width="0.9" height="5.9"/><rect x="231.7" y="572.2" width="0.9" height="5.9"/><rect x="233.3" y="571.8" width="0.9" height="6.3"/><rect x="234.8" y="570.5" width="0.9" height="7.6"/><rect x="236.4" y="571.2" width="0.9" height="6.9"/><rect x="237.9" y="571.5" width="0.9" height="6.6"/><rect x="239.5" y="570.8" width="0.9" height="7.3"/><rect x="241.0" y="571.1" width="0.9" height="7.0"/><rect x="242.6" y="571.5" width="0.9" height="6.6"/><rect x="244.1" y="570.2" width="0.9" height="7.9"/><rect x="245.7" y="570.4" width="0.9" height="7.7"/><rect x="247.2" y="571.6" width="0.9" height="6.5"/><rect x="248.8" y="570.7" width="0.9" height="7.4"/><rect x="250.3" y="570.8" width="0.9" height="7.3"/><rect x="251.9" y="569.9" width="0.9" height="8.2"/><rect x="253.4" y="570.3" width="0.9" height="7.8"/><rect x="255.0" y="571.5" width="0.9" height="6.6"/><rect x="256.5" y="569.7" width="0.9" height="8.4"/><rect x="258.1" y="572.0" width="0.9" height="6.1"/><rect x="259.6" y="571.2" width="0.9" height="6.9"/><rect x="261.2" y="570.4" width="0.9" height="7.7"/><rect x="262.7" y="572.0" width="0.9" height="6.1"/><rect x="264.3" y="571.1" width="0.9" height="7.0"/><rect x="265.8" y="572.3" width="0.9" height="5.8"/><rect x="267.4" y="570.7" width="0.9" height="7.4"/><rect x="268.9" y="570.5" width="0.9" height="7.6"/><rect x="270.5" y="571.0" width="0.9" height="7.1"/><rect x="272.0" y="570.2" width="0.9" height="7.9"/><rect x="273.6" y="571.7" width="0.9" height="6.4"/><rect x="275.1" y="570.7" width="0.9" height="7.4"/><rect x="276.7" y="571.0" width="0.9" height="7.1"/><rect x="278.2" y="571.1" width="0.9" height="7.0"/><rect x="279.8" y="571.4" width="0.9" height="6.7"/><rect x="281.3" y="570.5" width="0.9" height="7.6"/><rect x="282.9" y="570.2" width="0.9" height="7.9"/><rect x="284.4" y="571.5" width="0.9" height="6.6"/><rect x="286.0" y="571.0" width="0.9" height="7.1"/><rect x="287.5" y="572.6" width="0.9" height="5.5"/><rect x="289.1" y="570.9" width="0.9" height="7.2"/><rect x="290.6" y="571.1" width="0.9" height="7.0"/><rect x="292.2" y="570.2" width="0.9" height="7.9"/><rect x="293.7" y="570.7" width="0.9" height="7.4"/><rect x="295.3" y="572.1" width="0.9" height="6.0"/><rect x="296.8" y="571.9" width="0.9" height="6.2"/><rect x="298.4" y="571.2" width="0.9" height="6.9"/><rect x="299.9" y="572.9" width="0.9" height="5.2"/><rect x="301.5" y="571.8" width="0.9" height="6.3"/><rect x="303.0" y="572.5" width="0.9" height="5.6"/><rect x="304.6" y="572.7" width="0.9" height="5.4"/><rect x="306.1" y="572.9" width="0.9" height="5.2"/><rect x="307.7" y="571.1" width="0.9" height="7.0"/><rect x="309.2" y="572.7" width="0.9" height="5.4"/><rect x="310.8" y="572.5" width="0.9" height="5.6"/><rect x="312.3" y="572.1" width="0.9" height="6.0"/><rect x="313.9" y="570.9" width="0.9" height="7.2"/><rect x="315.4" y="573.0" width="0.9" height="5.1"/><rect x="317.0" y="572.0" width="0.9" height="6.1"/><rect x="318.5" y="566.3" width="0.9" height="11.8"/><rect x="320.1" y="565.4" width="0.9" height="12.7"/><rect x="321.6" y="565.6" width="0.9" height="12.5"/><rect x="323.2" y="565.5" width="0.9" height="12.6"/><rect x="324.7" y="567.0" width="0.9" height="11.1"/><rect x="326.3" y="566.6" width="0.9" height="11.5"/><rect x="327.8" y="566.8" width="0.9" height="11.3"/><rect x="329.4" y="565.4" width="0.9" height="12.7"/><rect x="330.9" y="565.2" width="0.9" height="12.9"/><rect x="332.5" y="567.8" width="0.9" height="10.3"/><rect x="334.0" y="567.8" width="0.9" height="10.3"/><rect x="335.6" y="567.8" width="0.9" height="10.3"/><rect x="337.1" y="567.8" width="0.9" height="10.3"/><rect x="338.7" y="567.3" width="0.9" height="10.8"/><rect x="340.2" y="567.1" width="0.9" height="11.0"/><rect x="341.8" y="568.0" width="0.9" height="10.1"/><rect x="343.3" y="568.8" width="0.9" height="9.3"/><rect x="344.9" y="567.8" width="0.9" height="10.3"/><rect x="346.4" y="568.0" width="0.9" height="10.1"/><rect x="348.0" y="567.5" width="0.9" height="10.6"/><rect x="349.5" y="566.6" width="0.9" height="11.5"/><rect x="351.1" y="567.4" width="0.9" height="10.7"/><rect x="352.6" y="567.9" width="0.9" height="10.2"/><rect x="354.2" y="567.7" width="0.9" height="10.4"/><rect x="355.7" y="567.6" width="0.9" height="10.5"/><rect x="357.3" y="569.3" width="0.9" height="8.8"/><rect x="358.8" y="567.2" width="0.9" height="10.9"/><rect x="360.4" y="567.6" width="0.9" height="10.5"/><rect x="361.9" y="567.4" width="0.9" height="10.7"/><rect x="363.5" y="567.7" width="0.9" height="10.4"/><rect x="365.0" y="568.8" width="0.9" height="9.3"/><rect x="366.6" y="568.9" width="0.9" height="9.2"/><rect x="368.1" y="569.7" width="0.9" height="8.4"/><rect x="369.7" y="568.4" width="0.9" height="9.7"/><rect x="371.2" y="570.0" width="0.9" height="8.1"/><rect x="372.8" y="570.1" width="0.9" height="8.0"/><rect x="374.3" y="569.8" width="0.9" height="8.3"/><rect x="375.9" y="570.0" width="0.9" height="8.1"/><rect x="377.4" y="569.6" width="0.9" height="8.5"/><rect x="379.0" y="570.4" width="0.9" height="7.7"/><rect x="380.5" y="570.6" width="0.9" height="7.5"/><rect x="382.1" y="570.3" width="0.9" height="7.8"/><rect x="383.6" y="570.5" width="0.9" height="7.6"/><rect x="385.2" y="569.9" width="0.9" height="8.2"/><rect x="386.7" y="570.9" width="0.9" height="7.2"/><rect x="388.3" y="568.7" width="0.9" height="9.4"/><rect x="389.8" y="569.5" width="0.9" height="8.6"/><rect x="391.4" y="570.8" width="0.9" height="7.3"/><rect x="392.9" y="575.1" width="0.9" height="3.0"/><rect x="394.5" y="574.9" width="0.9" height="3.2"/><rect x="396.0" y="574.8" width="0.9" height="3.3"/><rect x="397.6" y="575.5" width="0.9" height="2.6"/><rect x="399.1" y="573.7" width="0.9" height="4.4"/><rect x="400.7" y="573.3" width="0.9" height="4.8"/><rect x="402.2" y="574.7" width="0.9" height="3.4"/><rect x="403.8" y="574.7" width="0.9" height="3.4"/><rect x="405.3" y="575.8" width="0.9" height="2.3"/><rect x="406.9" y="575.8" width="0.9" height="2.3"/><rect x="408.4" y="575.2" width="0.9" height="2.9"/><rect x="410.0" y="575.4" width="0.9" height="2.7"/><rect x="411.5" y="574.0" width="0.9" height="4.1"/><rect x="413.1" y="575.8" width="0.9" height="2.3"/><rect x="414.6" y="567.7" width="0.9" height="10.4"/><rect x="416.2" y="565.3" width="0.9" height="12.8"/><rect x="417.7" y="566.4" width="0.9" height="11.7"/><rect x="419.3" y="567.5" width="0.9" height="10.6"/><rect x="420.8" y="566.5" width="0.9" height="11.6"/><rect x="422.4" y="567.8" width="0.9" height="10.3"/><rect x="423.9" y="566.6" width="0.9" height="11.5"/><rect x="425.5" y="565.4" width="0.9" height="12.7"/><rect x="427.0" y="565.8" width="0.9" height="12.3"/><rect x="428.6" y="566.3" width="0.9" height="11.8"/><rect x="430.1" y="567.4" width="0.9" height="10.7"/><rect x="431.7" y="567.2" width="0.9" height="10.9"/><rect x="433.2" y="567.8" width="0.9" height="10.3"/><rect x="434.8" y="566.2" width="0.9" height="11.9"/><rect x="436.3" y="566.9" width="0.9" height="11.2"/><rect x="437.9" y="566.3" width="0.9" height="11.8"/><rect x="439.4" y="567.5" width="0.9" height="10.6"/><rect x="441.0" y="567.8" width="0.9" height="10.3"/><rect x="442.5" y="566.3" width="0.9" height="11.8"/><rect x="444.1" y="565.9" width="0.9" height="12.2"/><rect x="445.6" y="566.3" width="0.9" height="11.8"/><rect x="447.2" y="566.5" width="0.9" height="11.6"/><rect x="448.7" y="566.5" width="0.9" height="11.6"/><rect x="450.3" y="566.7" width="0.9" height="11.4"/><rect x="451.8" y="568.1" width="0.9" height="10.0"/><rect x="453.4" y="567.4" width="0.9" height="10.7"/><rect x="454.9" y="567.8" width="0.9" height="10.3"/><rect x="456.5" y="568.7" width="0.9" height="9.4"/><rect x="458.0" y="568.8" width="0.9" height="9.3"/><rect x="459.6" y="568.1" width="0.9" height="10.0"/><rect x="461.1" y="568.2" width="0.9" height="9.9"/><rect x="462.7" y="567.1" width="0.9" height="11.0"/><rect x="464.2" y="566.5" width="0.9" height="11.6"/><rect x="465.8" y="567.9" width="0.9" height="10.2"/><rect x="467.3" y="566.6" width="0.9" height="11.5"/><rect x="468.9" y="566.5" width="0.9" height="11.6"/><rect x="470.4" y="566.7" width="0.9" height="11.4"/><rect x="472.0" y="568.2" width="0.9" height="9.9"/><rect x="473.5" y="568.7" width="0.9" height="9.4"/><rect x="475.1" y="568.7" width="0.9" height="9.4"/><rect x="476.6" y="568.8" width="0.9" height="9.3"/><rect x="478.2" y="568.8" width="0.9" height="9.3"/><rect x="479.7" y="567.8" width="0.9" height="10.3"/><rect x="481.3" y="567.1" width="0.9" height="11.0"/><rect x="482.8" y="567.3" width="0.9" height="10.8"/><rect x="484.4" y="568.3" width="0.9" height="9.8"/><rect x="485.9" y="567.8" width="0.9" height="10.3"/><rect x="487.5" y="567.5" width="0.9" height="10.6"/><rect x="489.0" y="569.4" width="0.9" height="8.7"/><rect x="490.6" y="567.9" width="0.9" height="10.2"/><rect x="492.1" y="573.3" width="0.9" height="4.8"/><rect x="493.7" y="573.8" width="0.9" height="4.3"/><rect x="495.2" y="573.9" width="0.9" height="4.2"/><rect x="496.8" y="574.7" width="0.9" height="3.4"/><rect x="498.3" y="575.6" width="0.9" height="2.5"/><rect x="499.9" y="574.1" width="0.9" height="4.0"/><rect x="501.4" y="575.4" width="0.9" height="2.7"/><rect x="503.0" y="574.2" width="0.9" height="3.9"/><rect x="504.5" y="573.9" width="0.9" height="4.2"/><rect x="506.1" y="575.5" width="0.9" height="2.6"/><rect x="507.6" y="575.6" width="0.9" height="2.5"/><rect x="509.2" y="574.2" width="0.9" height="3.9"/><rect x="510.7" y="574.9" width="0.9" height="3.2"/><rect x="512.3" y="576.4" width="0.9" height="1.7"/><rect x="513.8" y="576.6" width="0.9" height="1.5"/><rect x="515.4" y="576.6" width="0.9" height="1.5"/><rect x="516.9" y="574.8" width="0.9" height="3.3"/><rect x="518.5" y="569.6" width="0.9" height="8.5"/><rect x="520.0" y="571.3" width="0.9" height="6.8"/><rect x="521.6" y="569.6" width="0.9" height="8.5"/><rect x="523.1" y="569.2" width="0.9" height="8.9"/><rect x="524.7" y="570.0" width="0.9" height="8.1"/><rect x="526.2" y="570.8" width="0.9" height="7.3"/><rect x="527.8" y="570.3" width="0.9" height="7.8"/><rect x="529.3" y="571.4" width="0.9" height="6.7"/><rect x="530.9" y="571.7" width="0.9" height="6.4"/><rect x="532.4" y="569.2" width="0.9" height="8.9"/><rect x="534.0" y="570.0" width="0.9" height="8.1"/><rect x="535.5" y="570.3" width="0.9" height="7.8"/><rect x="537.1" y="569.3" width="0.9" height="8.8"/><rect x="538.6" y="570.6" width="0.9" height="7.5"/><rect x="540.2" y="569.4" width="0.9" height="8.7"/><rect x="541.7" y="569.6" width="0.9" height="8.5"/><rect x="543.3" y="571.2" width="0.9" height="6.9"/><rect x="544.8" y="571.0" width="0.9" height="7.1"/><rect x="546.4" y="570.9" width="0.9" height="7.2"/><rect x="547.9" y="571.1" width="0.9" height="7.0"/><rect x="549.5" y="570.2" width="0.9" height="7.9"/><rect x="551.0" y="571.0" width="0.9" height="7.1"/><rect x="552.6" y="570.6" width="0.9" height="7.5"/><rect x="554.1" y="571.4" width="0.9" height="6.7"/><rect x="555.7" y="569.3" width="0.9" height="8.8"/><rect x="557.2" y="570.8" width="0.9" height="7.3"/><rect x="558.8" y="570.5" width="0.9" height="7.6"/><rect x="560.3" y="570.2" width="0.9" height="7.9"/><rect x="561.9" y="569.3" width="0.9" height="8.8"/><rect x="563.4" y="570.6" width="0.9" height="7.5"/><rect x="565.0" y="569.3" width="0.9" height="8.8"/><rect x="566.5" y="570.4" width="0.9" height="7.7"/><rect x="568.1" y="570.3" width="0.9" height="7.8"/><rect x="569.6" y="570.3" width="0.9" height="7.8"/><rect x="571.2" y="571.7" width="0.9" height="6.4"/><rect x="572.7" y="571.6" width="0.9" height="6.5"/><rect x="574.3" y="572.4" width="0.9" height="5.7"/><rect x="575.8" y="573.0" width="0.9" height="5.1"/><rect x="577.4" y="571.0" width="0.9" height="7.1"/><rect x="578.9" y="572.8" width="0.9" height="5.3"/><rect x="580.5" y="572.1" width="0.9" height="6.0"/><rect x="582.0" y="571.6" width="0.9" height="6.5"/><rect x="583.6" y="572.1" width="0.9" height="6.0"/><rect x="585.1" y="574.9" width="0.9" height="3.2"/><rect x="586.7" y="574.4" width="0.9" height="3.7"/><rect x="588.2" y="574.3" width="0.9" height="3.8"/><rect x="589.8" y="573.7" width="0.9" height="4.4"/><rect x="591.3" y="575.4" width="0.9" height="2.7"/><rect x="592.9" y="574.2" width="0.9" height="3.9"/><rect x="594.4" y="575.1" width="0.9" height="3.0"/><rect x="595.9" y="575.0" width="0.9" height="3.1"/><rect x="597.5" y="573.7" width="0.9" height="4.4"/><rect x="599.0" y="574.4" width="0.9" height="3.7"/><rect x="600.6" y="574.2" width="0.9" height="3.9"/><rect x="602.1" y="573.7" width="0.9" height="4.4"/><rect x="603.7" y="573.3" width="0.9" height="4.8"/><rect x="605.2" y="574.5" width="0.9" height="3.6"/><rect x="606.8" y="574.1" width="0.9" height="4.0"/><rect x="608.3" y="574.4" width="0.9" height="3.7"/><rect x="609.9" y="574.4" width="0.9" height="3.7"/><rect x="611.4" y="573.9" width="0.9" height="4.2"/><rect x="613.0" y="574.5" width="0.9" height="3.6"/><rect x="614.5" y="565.8" width="0.9" height="12.3"/><rect x="616.1" y="566.0" width="0.9" height="12.1"/><rect x="617.6" y="564.8" width="0.9" height="13.3"/><rect x="619.2" y="565.5" width="0.9" height="12.6"/><rect x="620.7" y="565.1" width="0.9" height="13.0"/><rect x="622.3" y="564.9" width="0.9" height="13.2"/><rect x="623.8" y="566.7" width="0.9" height="11.4"/><rect x="625.4" y="566.0" width="0.9" height="12.1"/><rect x="626.9" y="565.0" width="0.9" height="13.1"/><rect x="628.5" y="565.3" width="0.9" height="12.8"/><rect x="630.0" y="567.2" width="0.9" height="10.9"/><rect x="631.6" y="567.3" width="0.9" height="10.8"/><rect x="633.1" y="566.5" width="0.9" height="11.6"/><rect x="634.7" y="567.5" width="0.9" height="10.6"/><rect x="636.2" y="567.1" width="0.9" height="11.0"/><rect x="637.8" y="567.5" width="0.9" height="10.6"/><rect x="639.3" y="566.0" width="0.9" height="12.1"/><rect x="640.9" y="565.8" width="0.9" height="12.3"/><rect x="642.4" y="565.5" width="0.9" height="12.6"/><rect x="644.0" y="567.5" width="0.9" height="10.6"/><rect x="645.5" y="566.0" width="0.9" height="12.1"/><rect x="647.1" y="566.2" width="0.9" height="11.9"/><rect x="648.6" y="567.6" width="0.9" height="10.5"/><rect x="650.2" y="565.7" width="0.9" height="12.4"/><rect x="651.7" y="565.5" width="0.9" height="12.6"/><rect x="653.3" y="567.5" width="0.9" height="10.6"/><rect x="654.8" y="565.6" width="0.9" height="12.5"/><rect x="656.4" y="567.1" width="0.9" height="11.0"/><rect x="657.9" y="566.9" width="0.9" height="11.2"/><rect x="659.5" y="565.6" width="0.9" height="12.5"/><rect x="661.0" y="566.1" width="0.9" height="12.0"/><rect x="662.6" y="567.9" width="0.9" height="10.2"/><rect x="664.1" y="567.2" width="0.9" height="10.9"/><rect x="665.7" y="567.0" width="0.9" height="11.1"/><rect x="667.2" y="567.5" width="0.9" height="10.6"/><rect x="668.8" y="567.9" width="0.9" height="10.2"/><rect x="670.3" y="567.6" width="0.9" height="10.5"/><rect x="671.9" y="566.6" width="0.9" height="11.5"/><rect x="673.4" y="568.5" width="0.9" height="9.6"/><rect x="675.0" y="567.1" width="0.9" height="11.0"/><rect x="676.5" y="567.4" width="0.9" height="10.7"/><rect x="678.1" y="568.6" width="0.9" height="9.5"/><rect x="679.6" y="567.8" width="0.9" height="10.3"/><rect x="681.2" y="567.1" width="0.9" height="11.0"/><rect x="682.7" y="573.4" width="0.9" height="4.7"/><rect x="684.3" y="574.7" width="0.9" height="3.4"/><rect x="685.8" y="572.4" width="0.9" height="5.7"/><rect x="687.4" y="573.0" width="0.9" height="5.1"/><rect x="688.9" y="572.7" width="0.9" height="5.4"/><rect x="690.5" y="575.1" width="0.9" height="3.0"/><rect x="692.0" y="574.7" width="0.9" height="3.4"/><rect x="693.6" y="575.5" width="0.9" height="2.6"/><rect x="695.1" y="573.6" width="0.9" height="4.5"/><rect x="696.7" y="575.1" width="0.9" height="3.0"/><rect x="698.2" y="575.6" width="0.9" height="2.5"/><rect x="699.8" y="574.9" width="0.9" height="3.2"/><rect x="701.3" y="573.8" width="0.9" height="4.3"/><rect x="702.9" y="574.1" width="0.9" height="4.0"/><rect x="704.4" y="575.7" width="0.9" height="2.4"/><rect x="706.0" y="576.1" width="0.9" height="2.0"/><rect x="707.5" y="574.2" width="0.9" height="3.9"/><rect x="709.1" y="575.2" width="0.9" height="2.9"/><rect x="710.6" y="575.0" width="0.9" height="3.1"/><rect x="712.2" y="576.6" width="0.9" height="1.5"/><rect x="713.7" y="576.6" width="0.9" height="1.5"/><rect x="715.3" y="575.4" width="0.9" height="2.7"/><rect x="716.8" y="566.6" width="0.9" height="11.5"/><rect x="718.4" y="567.5" width="0.9" height="10.6"/><rect x="719.9" y="565.3" width="0.9" height="12.8"/><rect x="721.5" y="566.1" width="0.9" height="12.0"/><rect x="723.0" y="565.7" width="0.9" height="12.4"/><rect x="724.6" y="567.6" width="0.9" height="10.5"/><rect x="726.1" y="565.6" width="0.9" height="12.5"/><rect x="727.7" y="567.6" width="0.9" height="10.5"/><rect x="729.2" y="565.6" width="0.9" height="12.5"/><rect x="730.8" y="566.7" width="0.9" height="11.4"/><rect x="732.3" y="567.0" width="0.9" height="11.1"/><rect x="733.9" y="566.4" width="0.9" height="11.7"/><rect x="735.4" y="565.5" width="0.9" height="12.6"/><rect x="737.0" y="567.2" width="0.9" height="10.9"/><rect x="738.5" y="567.6" width="0.9" height="10.5"/><rect x="740.1" y="566.6" width="0.9" height="11.5"/><rect x="741.6" y="567.3" width="0.9" height="10.8"/><rect x="743.2" y="567.7" width="0.9" height="10.4"/><rect x="744.7" y="567.6" width="0.9" height="10.5"/><rect x="746.3" y="567.9" width="0.9" height="10.2"/><rect x="747.8" y="567.5" width="0.9" height="10.6"/><rect x="749.4" y="567.2" width="0.9" height="10.9"/><rect x="750.9" y="567.3" width="0.9" height="10.8"/><rect x="752.5" y="566.1" width="0.9" height="12.0"/><rect x="754.0" y="567.3" width="0.9" height="10.8"/><rect x="755.6" y="566.8" width="0.9" height="11.3"/><rect x="757.1" y="567.6" width="0.9" height="10.5"/><rect x="758.7" y="567.2" width="0.9" height="10.9"/><rect x="760.2" y="568.1" width="0.9" height="10.0"/><rect x="761.8" y="567.5" width="0.9" height="10.6"/><rect x="763.3" y="568.1" width="0.9" height="10.0"/><rect x="764.9" y="566.3" width="0.9" height="11.8"/><rect x="766.4" y="566.8" width="0.9" height="11.3"/><rect x="768.0" y="567.7" width="0.9" height="10.4"/><rect x="769.5" y="567.0" width="0.9" height="11.1"/><rect x="771.1" y="565.8" width="0.9" height="12.3"/><rect x="772.6" y="568.0" width="0.9" height="10.1"/><rect x="774.2" y="566.1" width="0.9" height="12.0"/><rect x="775.7" y="567.2" width="0.9" height="10.9"/><rect x="777.3" y="567.0" width="0.9" height="11.1"/><rect x="778.8" y="566.2" width="0.9" height="11.9"/><rect x="780.4" y="567.3" width="0.9" height="10.8"/><rect x="781.9" y="567.0" width="0.9" height="11.1"/><rect x="783.5" y="566.6" width="0.9" height="11.5"/><rect x="785.0" y="565.8" width="0.9" height="12.3"/><rect x="786.6" y="567.5" width="0.9" height="10.6"/><rect x="788.1" y="566.3" width="0.9" height="11.8"/><rect x="789.7" y="566.6" width="0.9" height="11.5"/><rect x="791.2" y="566.8" width="0.9" height="11.3"/><rect x="792.8" y="567.4" width="0.9" height="10.7"/><rect x="794.3" y="567.6" width="0.9" height="10.5"/><rect x="795.9" y="568.3" width="0.9" height="9.8"/><rect x="797.4" y="568.2" width="0.9" height="9.9"/><rect x="799.0" y="568.3" width="0.9" height="9.8"/><rect x="800.5" y="566.6" width="0.9" height="11.5"/><rect x="802.1" y="567.9" width="0.9" height="10.2"/><rect x="803.6" y="568.1" width="0.9" height="10.0"/><rect x="805.2" y="568.4" width="0.9" height="9.7"/><rect x="806.7" y="566.4" width="0.9" height="11.7"/><rect x="808.3" y="566.4" width="0.9" height="11.7"/><rect x="809.8" y="566.9" width="0.9" height="11.2"/><rect x="811.4" y="567.9" width="0.9" height="10.2"/><rect x="812.9" y="568.0" width="0.9" height="10.1"/><rect x="814.5" y="567.9" width="0.9" height="10.2"/><rect x="816.0" y="567.5" width="0.9" height="10.6"/><rect x="817.6" y="568.8" width="0.9" height="9.3"/><rect x="819.1" y="568.1" width="0.9" height="10.0"/><rect x="820.7" y="568.6" width="0.9" height="9.5"/><rect x="822.2" y="566.8" width="0.9" height="11.3"/><rect x="823.8" y="566.8" width="0.9" height="11.3"/><rect x="825.3" y="567.9" width="0.9" height="10.2"/><rect x="826.9" y="568.7" width="0.9" height="9.4"/><rect x="828.4" y="566.9" width="0.9" height="11.2"/><rect x="830.0" y="568.6" width="0.9" height="9.5"/><rect x="831.5" y="568.5" width="0.9" height="9.6"/><rect x="833.1" y="569.5" width="0.9" height="8.6"/><rect x="834.6" y="568.5" width="0.9" height="9.6"/><rect x="836.2" y="568.3" width="0.9" height="9.8"/><rect x="837.7" y="568.2" width="0.9" height="9.9"/><rect x="839.3" y="569.0" width="0.9" height="9.1"/><rect x="840.8" y="568.3" width="0.9" height="9.8"/><rect x="842.4" y="569.6" width="0.9" height="8.5"/><rect x="843.9" y="569.0" width="0.9" height="9.1"/><rect x="845.5" y="569.4" width="0.9" height="8.7"/><rect x="847.0" y="568.7" width="0.9" height="9.4"/><rect x="848.6" y="569.6" width="0.9" height="8.5"/><rect x="850.1" y="569.7" width="0.9" height="8.4"/><rect x="851.7" y="569.0" width="0.9" height="9.1"/><rect x="853.2" y="569.2" width="0.9" height="8.9"/><rect x="854.8" y="568.3" width="0.9" height="9.8"/><rect x="856.3" y="568.5" width="0.9" height="9.6"/><rect x="857.9" y="567.9" width="0.9" height="10.2"/><rect x="859.4" y="568.2" width="0.9" height="9.9"/><rect x="861.0" y="568.1" width="0.9" height="10.0"/><rect x="862.5" y="567.7" width="0.9" height="10.4"/><rect x="864.1" y="569.0" width="0.9" height="9.1"/><rect x="865.6" y="569.2" width="0.9" height="8.9"/><rect x="867.2" y="567.5" width="0.9" height="10.6"/><rect x="868.7" y="569.7" width="0.9" height="8.4"/><rect x="870.3" y="568.2" width="0.9" height="9.9"/><rect x="871.8" y="568.4" width="0.9" height="9.7"/><rect x="873.4" y="570.0" width="0.9" height="8.1"/><rect x="874.9" y="568.0" width="0.9" height="10.1"/><rect x="876.5" y="567.9" width="0.9" height="10.2"/><rect x="878.0" y="569.1" width="0.9" height="9.0"/><rect x="879.6" y="568.8" width="0.9" height="9.3"/><rect x="881.1" y="568.6" width="0.9" height="9.5"/><rect x="882.7" y="570.3" width="0.9" height="7.8"/><rect x="884.2" y="569.3" width="0.9" height="8.8"/><rect x="885.8" y="569.4" width="0.9" height="8.7"/><rect x="887.3" y="568.5" width="0.9" height="9.6"/><rect x="888.9" y="568.6" width="0.9" height="9.5"/><rect x="890.4" y="568.6" width="0.9" height="9.5"/><rect x="892.0" y="569.2" width="0.9" height="8.9"/><rect x="893.5" y="568.4" width="0.9" height="9.7"/><rect x="895.1" y="568.9" width="0.9" height="9.2"/><rect x="896.6" y="568.9" width="0.9" height="9.2"/><rect x="898.2" y="570.1" width="0.9" height="8.0"/><rect x="899.7" y="570.6" width="0.9" height="7.5"/><rect x="901.3" y="570.4" width="0.9" height="7.7"/><rect x="902.8" y="569.8" width="0.9" height="8.3"/><rect x="904.4" y="570.4" width="0.9" height="7.7"/><rect x="905.9" y="568.5" width="0.9" height="9.6"/><rect x="907.5" y="569.2" width="0.9" height="8.9"/><rect x="909.0" y="569.1" width="0.9" height="9.0"/><rect x="910.6" y="569.1" width="0.9" height="9.0"/><rect x="912.1" y="568.9" width="0.9" height="9.2"/><rect x="913.7" y="569.4" width="0.9" height="8.7"/><rect x="915.2" y="570.7" width="0.9" height="7.4"/><rect x="916.8" y="568.6" width="0.9" height="9.5"/><rect x="918.3" y="568.8" width="0.9" height="9.3"/><rect x="919.9" y="569.4" width="0.9" height="8.7"/><rect x="921.4" y="569.3" width="0.9" height="8.8"/><rect x="923.0" y="567.0" width="0.9" height="11.1"/><rect x="924.5" y="568.6" width="0.9" height="9.5"/><rect x="926.1" y="566.9" width="0.9" height="11.2"/><rect x="927.6" y="568.1" width="0.9" height="10.0"/><rect x="929.2" y="568.6" width="0.9" height="9.5"/><rect x="930.7" y="568.2" width="0.9" height="9.9"/><rect x="932.3" y="567.0" width="0.9" height="11.1"/><rect x="933.8" y="568.4" width="0.9" height="9.7"/><rect x="935.4" y="567.0" width="0.9" height="11.1"/><rect x="936.9" y="566.4" width="0.9" height="11.7"/><rect x="938.5" y="567.7" width="0.9" height="10.4"/><rect x="940.0" y="568.0" width="0.9" height="10.1"/><rect x="941.6" y="567.8" width="0.9" height="10.3"/><rect x="943.1" y="567.3" width="0.9" height="10.8"/><rect x="944.7" y="567.1" width="0.9" height="11.0"/><rect x="946.2" y="567.5" width="0.9" height="10.6"/><rect x="947.8" y="567.5" width="0.9" height="10.6"/><rect x="949.3" y="569.0" width="0.9" height="9.1"/><rect x="950.9" y="568.8" width="0.9" height="9.3"/><rect x="952.4" y="568.5" width="0.9" height="9.6"/><rect x="954.0" y="567.3" width="0.9" height="10.8"/><rect x="955.5" y="568.5" width="0.9" height="9.6"/><rect x="957.1" y="567.8" width="0.9" height="10.3"/><rect x="958.6" y="569.3" width="0.9" height="8.8"/><rect x="960.2" y="569.2" width="0.9" height="8.9"/><rect x="961.7" y="568.7" width="0.9" height="9.4"/><rect x="963.3" y="567.6" width="0.9" height="10.5"/><rect x="964.8" y="567.6" width="0.9" height="10.5"/><rect x="966.4" y="567.7" width="0.9" height="10.4"/><rect x="967.9" y="568.7" width="0.9" height="9.4"/><rect x="969.5" y="568.1" width="0.9" height="10.0"/><rect x="971.0" y="568.3" width="0.9" height="9.8"/><rect x="972.6" y="568.3" width="0.9" height="9.8"/><rect x="974.1" y="569.3" width="0.9" height="8.8"/><rect x="975.7" y="567.3" width="0.9" height="10.8"/><rect x="977.2" y="569.1" width="0.9" height="9.0"/><rect x="978.8" y="567.1" width="0.9" height="11.0"/><rect x="980.3" y="567.2" width="0.9" height="10.9"/><rect x="981.9" y="569.7" width="0.9" height="8.4"/><rect x="983.4" y="569.5" width="0.9" height="8.6"/><rect x="985.0" y="568.6" width="0.9" height="9.5"/><rect x="986.5" y="568.2" width="0.9" height="9.9"/><rect x="988.1" y="569.5" width="0.9" height="8.6"/><rect x="989.6" y="570.0" width="0.9" height="8.1"/><rect x="991.2" y="570.2" width="0.9" height="7.9"/><rect x="992.7" y="568.2" width="0.9" height="9.9"/><rect x="994.3" y="570.2" width="0.9" height="7.9"/><rect x="995.8" y="569.2" width="0.9" height="8.9"/><rect x="997.4" y="570.3" width="0.9" height="7.8"/><rect x="998.9" y="569.3" width="0.9" height="8.8"/><rect x="1000.5" y="568.2" width="0.9" height="9.9"/><rect x="1002.0" y="570.4" width="0.9" height="7.7"/><rect x="1003.6" y="568.6" width="0.9" height="9.5"/><rect x="1005.1" y="569.4" width="0.9" height="8.7"/><rect x="1006.7" y="568.4" width="0.9" height="9.7"/><rect x="1008.2" y="568.9" width="0.9" height="9.2"/><rect x="1009.8" y="570.1" width="0.9" height="8.0"/><rect x="1011.3" y="568.4" width="0.9" height="9.7"/><rect x="1012.9" y="569.4" width="0.9" height="8.7"/><rect x="1014.4" y="570.6" width="0.9" height="7.5"/><rect x="1016.0" y="570.7" width="0.9" height="7.4"/></g></svg>
<div class="a" style="left:642.6px;top:410px;width:1px;height:170.5px;background:#e8e8ea"></div>
<svg class="a" style="left:638.4px;top:404.5px" width="9" height="13" viewBox="0 0 9 13"><path d="M1 1 H8 V8.5 L4.5 12 L1 8.5 Z" fill="#1b1b1d" stroke="#f0f0f2" stroke-width="1.2"/></svg>
<div class="a" style="left:57px;top:585.7px;width:606.4px;height:3.4px;background:#38383c;border-radius:2px"></div>
</div>

<div id="w1">
  <!-- coords inside w1: page x - 54.5, page y - 45 -->
  <div class="a" style="left:0;top:0;width:636px;height:17px;background:#29292d"></div>
  <div class="a" style="left:3.9px;top:2px;width:8px;height:8px;border-radius:50%;background:#FE5F57"></div>
  <div class="a" style="left:18.9px;top:2px;width:8px;height:8px;border-radius:50%;background:#FEBC2E"></div>
  <div class="a" style="left:34.1px;top:2px;width:8px;height:8px;border-radius:50%;background:#28C840"></div>
  <div class="t" style="left:1.4px;width:636px;text-align:center;top:2.2px;font-size:8.8px;color:#e2e2e4">Script to video</div>
  <div class="a" style="left:0;top:17px;width:636px;height:408px;background:radial-gradient(ellipse 70% 60% at 85% 105%,#1b2e4c 0%,#161d2c 45%,rgba(18,18,21,0) 100%)"></div>
  <!-- sidebar -->
  <div class="t" style="left:13.2px;top:29.1px;font-size:7.7px;color:#9a9a9e">Already have an idea?</div>
  <svg class="a" style="left:13.5px;top:46px" width="10" height="10" viewBox="0 0 10 10"><path d="M1.5 8.5 L2 6.8 L7 1.8 L8.2 3 L3.2 8 Z" fill="#f2f2f2"/></svg>
  <div class="t" style="left:29.8px;top:47.8px;font-size:8px;color:#f0f0f0">Write your own script</div>
  <div class="t" style="left:13.2px;top:68.2px;font-size:7.7px;color:#8a8a8e">AI writer</div>
  <div class="a" style="left:7.9px;top:122.5px;width:120.4px;height:18.9px;background:#26262a;border-radius:4px"></div>
  <div class="t" style="left:29.8px;top:86.0px;font-size:8px;color:#ececee">Movies and TVs</div>
  <div class="t" style="left:29.8px;top:107.3px;font-size:8px;color:#ececee">Games</div>
  <div class="t" style="left:29.8px;top:128.6px;font-size:8px;color:#ececee">Commercials</div>
  <div class="t" style="left:29.8px;top:150.0px;font-size:8px;color:#ececee">Relations</div>
  <div class="t" style="left:29.8px;top:171.3px;font-size:8px;color:#ececee">Life stories</div>
  <div class="t" style="left:29.8px;top:192.6px;font-size:8px;color:#ececee">Cooking tutorials</div>
  <div class="t" style="left:29.8px;top:214.2px;font-size:8px;color:#ececee">Tech info</div>
  <div class="t" style="left:29.8px;top:235.5px;font-size:8px;color:#ececee">Other</div>
  <!-- sidebar icons -->
  <svg class="a" style="left:13.5px;top:84px" width="10" height="10" viewBox="0 0 10 10"><path d="M0.8 1.3 H9.2 V3 H0.8 Z" fill="#6a62ff"/><path d="M2.2 1.3 L3 3 M4.6 1.3 L5.4 3 M7 1.3 L7.8 3" stroke="#111114" stroke-width="0.6"/><rect x="0.8" y="3.6" width="8.4" height="5.4" rx="0.6" fill="#6a62ff"/><rect x="2.2" y="5" width="5.2" height="0.9" fill="#d8d6ff"/><rect x="2.2" y="6.8" width="3.2" height="0.9" fill="#d8d6ff"/></svg>
  <svg class="a" style="left:13.5px;top:105.5px" width="10" height="10" viewBox="0 0 10 10"><path d="M5 3 L6 0.8" stroke="#9250ff" stroke-width="0.8"/><rect x="0.8" y="3" width="8.4" height="6" rx="1.2" fill="#9250ff"/><path d="M2 6 H4 M3 5 V7" stroke="#f0e8ff" stroke-width="0.8"/><circle cx="6.6" cy="5.4" r="0.6" fill="#f0e8ff"/><circle cx="7.4" cy="6.8" r="0.6" fill="#f0e8ff"/></svg>
  <svg class="a" style="left:13.5px;top:126.5px" width="10" height="11" viewBox="0 0 10 11"><rect x="1.3" y="1" width="7.4" height="6.2" fill="#23a8ff"/><path d="M3 5.8 L5 3.5 L7 5.8 Z" fill="#9ad8ff"/><path d="M5 7.2 V9 M3.5 10 L5 8.8 L6.5 10 Z" stroke="#23a8ff" stroke-width="0.9" fill="#23a8ff"/></svg>
  <svg class="a" style="left:13.5px;top:148.5px" width="10" height="10" viewBox="0 0 10 10"><circle cx="4" cy="3" r="2.2" fill="#6a7aff"/><path d="M0.5 9.5 Q4 4.5 7.5 9.5 Z" fill="#6a7aff"/><rect x="7" y="3.5" width="2.5" height="1" fill="#6a7aff"/></svg>
  <svg class="a" style="left:13.5px;top:169.5px" width="10" height="10" viewBox="0 0 10 10"><circle cx="3" cy="2.5" r="1.8" fill="#17c2d8"/><path d="M1 9.5 L2 5 L6 6 L9.5 4.5 L9.5 9.5 Z" fill="#17c2d8"/></svg>
  <svg class="a" style="left:13.5px;top:191px" width="10" height="10" viewBox="0 0 10 10"><path d="M1 1 L9 1 L5.6 5.5 L5.6 8.3 L7.5 9.5 L2.5 9.5 L4.4 8.3 L4.4 5.5 Z" fill="#a453ff"/></svg>
  <svg class="a" style="left:13.5px;top:212.5px" width="10" height="10" viewBox="0 0 10 10"><path d="M9.5 0.5 L4 3 L1.5 6 L4 8.5 L7 6 Z" fill="#1fcfe0"/><path d="M0.5 9.5 L2.2 6.8 L3.2 7.8 Z" fill="#1fcfe0"/></svg>
  <svg class="a" style="left:13.5px;top:234px" width="10" height="10" viewBox="0 0 10 10"><rect x="0.5" y="0.5" width="9" height="9" rx="2" fill="#2c3050"/><rect x="2.5" y="3.2" width="4" height="0.9" fill="#c8cce0"/><rect x="2.5" y="5.5" width="2.5" height="0.9" fill="#c8cce0"/></svg>

  <!-- form panel -->
  <div class="a" style="left:136.5px;top:25.4px;width:186.6px;height:387.8px;border-radius:6px;background:linear-gradient(180deg,#232326 0%,#232327 60%,#21252e 100%)"></div>
  <div class="t" style="left:147px;top:38.4px;font-size:7.8px;color:#9b9b9f">Product name <span style="color:#f04a4a">*</span></div>
  <div class="a" style="left:147px;top:55px;width:165.5px;height:16px;background:#333337;border-radius:3px"></div>
  <div class="t" style="left:152.2px;top:59.8px;font-size:7.9px;color:#efeff1">Sweeping robot</div>
  <div class="t" style="left:147px;top:86.5px;font-size:7.8px;color:#9b9b9f">Brand name</div>
  <div class="a" style="left:147px;top:103.5px;width:165.5px;height:16px;background:#333337;border-radius:3px"></div>
  <div class="t" style="left:152.2px;top:108.1px;font-size:7.9px;color:#efeff1">CleanSphere</div>
  <div class="t" style="left:147px;top:134.7px;font-size:7.8px;color:#9b9b9f">Selling points</div>
  <div class="a" style="left:147px;top:151px;width:165.5px;height:27px;background:#333337;border-radius:3px"></div>
  <div class="t" style="left:152.2px;top:156.1px;font-size:7.9px;color:#efeff1">Efficient cleaning system, intelligent naviga</div>
  <div class="t" style="left:152.2px;top:166.7px;font-size:7.9px;color:#efeff1">tion and obstacle avoidance</div>
  <div class="t" style="left:147px;top:193.4px;font-size:7.8px;color:#9b9b9f">Target audience</div>
  <div class="a" style="left:147px;top:210px;width:165.5px;height:26.5px;background:#333337;border-radius:3px"></div>
  <div class="t" style="left:152.2px;top:215.4px;font-size:7.9px;color:#efeff1">Busy office workers, elderly and people wit</div>
  <div class="t" style="left:152.2px;top:225.8px;font-size:7.9px;color:#efeff1">h limited mobility, technology enthusiasts</div>
  <div class="t" style="left:147px;top:252.4px;font-size:7.8px;color:#9b9b9f">Duration</div>
  <div class="a" style="left:147.1px;top:269.2px;width:30.1px;height:15.8px;background:#1b1b20;border:1px solid #5560e8;border-radius:3px"></div>
  <div class="t" style="left:147.1px;width:30.1px;text-align:center;top:274.0px;font-size:8px;color:#f2f2f2">Any</div>
  <div class="a" style="left:182.9px;top:269.2px;width:28px;height:15.8px;background:#323236;border-radius:3px"></div>
  <div class="t" style="left:182.9px;width:28px;text-align:center;top:274.0px;font-size:8px;color:#f2f2f2">15s</div>
  <div class="a" style="left:216.5px;top:269.2px;width:29.7px;height:15.8px;background:#323236;border-radius:3px"></div>
  <div class="t" style="left:216.5px;width:29.7px;text-align:center;top:274.0px;font-size:8px;color:#f2f2f2">30s</div>
  <div class="a" style="left:251.5px;top:269.2px;width:30px;height:15.8px;background:#323236;border-radius:3px"></div>
  <div class="t" style="left:251.5px;width:30px;text-align:center;top:274.0px;font-size:8px;color:#f2f2f2">45s</div>
  <div class="a" style="left:147.1px;top:290.7px;width:26.2px;height:15.9px;background:#323236;border-radius:3px"></div>
  <div class="t" style="left:147.1px;width:26.2px;text-align:center;top:295.5px;font-size:8px;color:#f2f2f2">1m</div>
  <div class="t" style="left:147px;top:321.9px;font-size:7.8px;color:#9b9b9f">Price</div>
  <div class="a" style="left:147px;top:339px;width:165.5px;height:15.6px;background:#303238;border-radius:3px"></div>
  <div class="t" style="left:152.2px;top:343.4px;font-size:7.9px;color:#66686e">Example: $10</div>
  <div class="t" style="left:147px;top:369.9px;font-size:7.8px;color:#9b9b9f">Promotion details</div>
  <div class="a" style="left:147.1px;top:386.7px;width:165.8px;height:15.8px;background:#ecedf0;border-radius:3px"></div>
  <svg class="a" style="left:200.5px;top:390.3px" width="9" height="9" viewBox="0 0 9 9"><path d="M7.3 3.2 A3.2 3.2 0 1 0 7.5 5.5" fill="none" stroke="#222" stroke-width="1"/><path d="M7.8 1 L7.6 3.6 L5.2 3.2" fill="none" stroke="#222" stroke-width="1"/></svg>
  <div class="t" style="left:215.3px;top:391.4px;font-size:8px;font-weight:700;color:#1a1a1c">Regenerate</div>

  <!-- script panel -->
  <div class="a" style="left:329.2px;top:25.5px;width:302px;height:387.3px;border-radius:6px;overflow:hidden;background:linear-gradient(180deg,#222225 0%,#212226 40%,#212a3a 75%,#22344f 100%)">
    <div class="a" style="left:0;top:36.9px;width:302px;height:1px;background:#303034"></div>
    <div class="a" style="left:0;top:349.5px;width:302px;height:1px;background:#2c3a50"></div>
  </div>
  <div class="t" style="left:339.7px;top:40.9px;font-size:10.3px;font-weight:700;color:#f2f2f4">Script 1</div>
  <div class="t" style="left:339.7px;top:73.8px;font-size:9.2px;color:#e2e2e4">Cleaning your house can be a chore, but it doesn't have to be.</div>
  <div class="t" style="left:339.7px;top:99.1px;font-size:9.2px;color:#e2e2e4">Introducing the Sweeping Robot, the perfect solution for your home</div>
  <div class="t" style="left:339.7px;top:111.8px;font-size:9.2px;color:#e2e2e4">cleaning needs. With its advanced intelligent navigation technology,</div>
  <div class="t" style="left:339.7px;top:124.4px;font-size:9.2px;color:#e2e2e4">it can easily navigate around your house and avoid any obstacles.</div>
  <div class="t" style="left:339.7px;top:137.1px;font-size:9.2px;color:#e2e2e4">Plus, it cleans thoroughly without any help from you. Say goodbye</div>
  <div class="t" style="left:339.7px;top:150.8px;font-size:9.2px;color:#e2e2e4">to the hassle of cleaning and hello to the Sweeping Robot.</div>
  <div class="t" style="left:339.7px;top:175.1px;font-size:9.2px;color:#e2e2e4">Order yours now and enjoy a tidy home.<span style="display:inline-block;width:0.8px;height:10px;background:#2ab8c8;vertical-align:-2px;margin-left:1px"></span></div>
  <svg class="a" style="left:340.3px;top:337.2px" width="9" height="9" viewBox="0 0 9 9"><circle cx="4.5" cy="4.5" r="3.9" fill="none" stroke="#7a7f8c" stroke-width="0.8"/><rect x="4.1" y="3.6" width="0.8" height="3" fill="#7a7f8c"/><rect x="4.1" y="2.2" width="0.8" height="0.8" fill="#7a7f8c"/></svg>
  <div class="t" style="left:353.3px;top:338.2px;font-size:8.5px;color:#777c89">The intelligently generated content is for informational</div>
  <div class="t" style="left:353.3px;top:349.7px;font-size:8.5px;color:#777c89">purposes only and does not represent the platform's</div>
  <div class="t" style="left:353.3px;top:360.8px;font-size:8.5px;color:#777c89">position</div>
  <svg class="a" style="left:587px;top:348px" width="11" height="11" viewBox="0 0 11 11"><path d="M1 5 H3 V10 H1 Z M3 5.2 L5.3 1.3 Q6.5 1 6.6 2.4 L6.2 4.5 H9.3 Q10.3 4.8 10 5.8 L8.9 9.3 Q8.6 10 7.8 10 H3" fill="none" stroke="#e6e6ea" stroke-width="0.9"/></svg>
  <svg class="a" style="left:607px;top:348px" width="11" height="11" viewBox="0 0 11 11"><path d="M1 6 H3 V1 H1 Z M3 5.8 L5.3 9.7 Q6.5 10 6.6 8.6 L6.2 6.5 H9.3 Q10.3 6.2 10 5.2 L8.9 1.7 Q8.6 1 7.8 1 H3" fill="none" stroke="#e6e6ea" stroke-width="0.9"/></svg>
  <svg class="a" style="left:340.5px;top:390px" width="7" height="9" viewBox="0 0 7 9"><path d="M5 1 L2 4.5 L5 8" fill="none" stroke="#8a8e98" stroke-width="1"/></svg>
  <div class="t" style="left:352.8px;top:391.1px;font-size:8px;color:#e0e0e4">1/3</div>
  <svg class="a" style="left:371px;top:390px" width="7" height="9" viewBox="0 0 7 9"><path d="M2 1 L5 4.5 L2 8" fill="none" stroke="#e0e0e4" stroke-width="1"/></svg>
  <div class="a" style="left:451.5px;top:387.2px;width:71.3px;height:15.1px;background:#2b2d32;border-radius:3px"></div>
  <svg class="a" style="left:456.5px;top:389.7px" width="11" height="10" viewBox="0 0 11 10"><circle cx="4.5" cy="3" r="2.2" fill="none" stroke="#d8d8dc" stroke-width="0.8"/><path d="M0.8 9.3 Q1 6 4.5 6 Q8 6 8.2 9.3 Z" fill="none" stroke="#d8d8dc" stroke-width="0.8"/><path d="M9 1.5 Q10 3 9 4.5" fill="none" stroke="#d8d8dc" stroke-width="0.7"/></svg>
  <div class="t" style="left:472.2px;top:391.8px;font-size:7.9px;font-weight:700;color:#ececef">Valley Girl</div>
  <svg class="a" style="left:514.5px;top:392.5px" width="6" height="6" viewBox="0 0 6 6"><path d="M1 2 L3 4 L5 2" fill="none" stroke="#ececef" stroke-width="0.9"/></svg>
  <div class="a" style="left:531.5px;top:386.6px;width:88.9px;height:16.4px;background:#e9eef6;border-radius:4px"></div>
  <div class="a" style="left:537px;top:390.5px;width:8.5px;height:8.5px;border-radius:50%;background:radial-gradient(circle at 35% 35%,#b8f0ff 0%,#5aa0ff 45%,#8a5cff 100%);box-shadow:0 0 3px #9fd8ff"></div>
  <div class="t" style="left:549.3px;top:391.6px;font-size:7.9px;font-weight:700;color:#1a1a1c">Generate video</div>
  <svg class="a" style="left:610px;top:392.5px" width="6" height="6" viewBox="0 0 6 6"><path d="M1 2 L3 4 L5 2" fill="none" stroke="#333" stroke-width="0.9"/></svg>
</div>

<div class="a" style="left:233px;top:445.5px;width:144px;height:144px;border-radius:50%;background:rgba(15,15,15,0.59);box-shadow:0 3px 8px rgba(0,0,0,0.12)"></div>
<svg class="a" style="left:0;top:0" width="1440" height="810" viewBox="0 0 1440 810">
<path d="M273.9 493.6 L297.25 517.5 L273.9 541.9" fill="none" stroke="#c9cac1" stroke-width="8.1" stroke-linejoin="miter"/>
<path d="M301.4 483.4 L334.5 517.5 L301.4 551.6" fill="none" stroke="#ffffff" stroke-width="11.9" stroke-linejoin="miter"/>
</svg>
<div class="a" style="left:1195.4px;top:320.1px;width:199.4px;height:200.6px;border-radius:40px;background:#fff;box-shadow:-1px 4px 10px rgba(210,230,60,0.25),-4px 10px 24px rgba(200,220,50,0.14)">
<svg width="200" height="200" viewBox="0 0 200 200" style="position:absolute;left:0;top:0">
<path fill="#000" d="M35.5 60 Q35.5 47.5 48 47.5 L131.3 47.5 Q143.8 47.5 143.8 60 L143.8 66.8 L35.5 66.8 Z"/>
<path fill="#000" d="M35.5 140 Q35.5 152.5 48 152.5 L131.3 152.5 Q143.8 152.5 143.8 140 L143.8 133.2 L35.5 133.2 Z"/>
<path fill="#000" d="M35.5 60 L35.5 81.9 L169.4 151.9 L169.4 129.7 L47.6 66.8 L47.6 60 Z"/>
<path fill="#000" d="M35.5 140 L35.5 118.1 L169.4 48.1 L169.4 70.3 L47.6 133.2 L47.6 140 Z"/>
</svg>
</div>

</div>
</body></html>
